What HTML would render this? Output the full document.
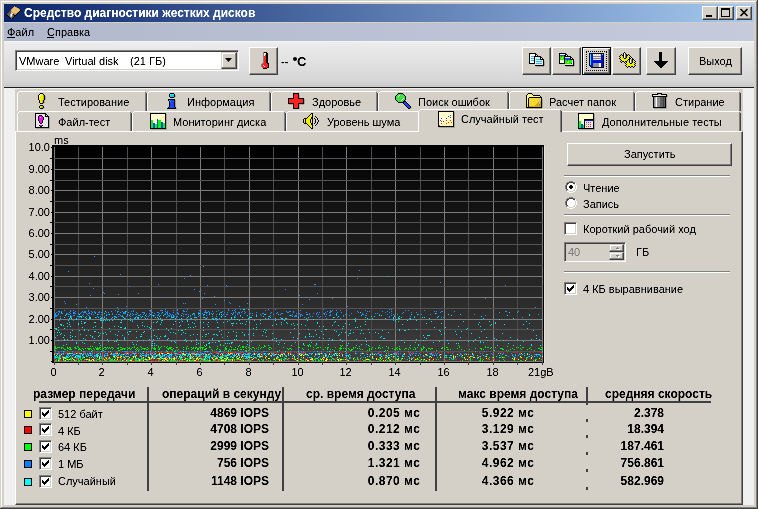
<!DOCTYPE html><html><head><meta charset="utf-8"><style>
html,body{margin:0;padding:0;}
body{width:758px;height:509px;position:relative;overflow:hidden;background:#d4d0c8;font-family:"Liberation Sans", sans-serif;font-size:11px;}
div{box-sizing:border-box;}
svg{position:absolute;overflow:visible}
.t{filter:url(#c)}
</style></head><body>
<svg width="0" height="0" style="position:absolute"><filter id="c" x="-10%" y="-50%" width="120%" height="200%"><feComponentTransfer><feFuncA type="linear" slope="1.6" intercept="-0.25"/></feComponentTransfer></filter></svg>
<div style="position:absolute;left:0px;top:0px;width:758px;height:509px;background:#d4d0c8;"></div>
<div style="position:absolute;left:1px;top:1px;width:756px;height:1px;background:#fff;"></div>
<div style="position:absolute;left:1px;top:1px;width:1px;height:506px;background:#fff;"></div>
<div style="position:absolute;left:0px;top:508px;width:758px;height:1px;background:#404040;"></div>
<div style="position:absolute;left:757px;top:0px;width:1px;height:509px;background:#404040;"></div>
<div style="position:absolute;left:1px;top:507px;width:756px;height:1px;background:#808080;"></div>
<div style="position:absolute;left:756px;top:1px;width:1px;height:507px;background:#808080;"></div>
<div style="position:absolute;left:4px;top:4px;width:750px;height:18px;background:linear-gradient(90deg,#0a246a,#a6caf0);"></div>
<svg style="left:6px;top:6px" width="16" height="13" shape-rendering="crispEdges"><path d="M8 0h1v1h-1zM7 1h1v1h-1zM10 1h1v1h-1zM6 2h1v1h-1zM12 2h1v1h-1zM5 3h1v1h-1zM13 3h1v1h-1zM5 5h1v1h-1zM6 6h1v1h-1zM11 6h1v1h-1zM7 7h4v1h-4zM8 8h2v1h-2z" fill="#c89040"/><path d="M8 1h2v1h-2zM7 2h5v1h-5zM6 3h3v1h-3zM11 3h2v1h-2zM5 4h4v1h-4zM11 4h3v1h-3zM6 5h7v1h-7zM7 6h4v1h-4z" fill="#f0c070"/><path d="M9 3h2v1h-2zM9 4h2v1h-2zM5 6h1v1h-1zM5 7h1v1h-1zM4 8h1v1h-1zM4 9h1v1h-1zM4 10h2v1h-2z" fill="#c0c0c0"/><path d="M4 4h1v1h-1zM3 5h1v1h-1zM2 6h1v1h-1zM1 7h1v1h-1z" fill="#404040"/><path d="M14 4h1v1h-1zM13 5h1v1h-1zM12 6h1v1h-1zM11 7h1v1h-1zM0 8h1v1h-1zM7 8h1v1h-1zM10 8h1v1h-1zM1 9h1v1h-1zM8 9h2v1h-2zM2 10h1v1h-1zM8 10h1v1h-1zM3 11h1v1h-1zM7 11h1v1h-1zM4 12h1v1h-1zM6 12h1v1h-1z" fill="#000000"/><path d="M4 5h1v1h-1zM3 6h2v1h-2zM2 7h3v1h-3zM1 8h3v1h-3zM2 9h2v1h-2zM7 9h1v1h-1zM3 10h1v1h-1zM6 10h2v1h-2zM4 11h3v1h-3zM5 12h1v1h-1z" fill="#606060"/><path d="M6 7h1v1h-1zM5 8h1v1h-1zM5 9h1v1h-1z" fill="#ffffff"/><path d="M6 8h1v1h-1zM6 9h1v1h-1z" fill="#808080"/></svg>
<div class="t" style="position:absolute;left:24px;top:6.84px;line-height:12px;font-size:12px;font-weight:bold;color:#fff;white-space:pre;">Средство диагностики жестких дисков</div>
<div style="position:absolute;left:702px;top:6px;width:16px;height:14px;box-sizing:border-box;background:#d4d0c8;border:1px solid;border-color:#fff #404040 #404040 #fff;box-shadow:inset -1px -1px #808080;"></div>
<div style="position:absolute;left:718px;top:6px;width:16px;height:14px;box-sizing:border-box;background:#d4d0c8;border:1px solid;border-color:#fff #404040 #404040 #fff;box-shadow:inset -1px -1px #808080;"></div>
<div style="position:absolute;left:736px;top:6px;width:16px;height:14px;box-sizing:border-box;background:#d4d0c8;border:1px solid;border-color:#fff #404040 #404040 #fff;box-shadow:inset -1px -1px #808080;"></div>
<div style="position:absolute;left:706px;top:15px;width:6px;height:2px;background:#000;"></div>
<div style="position:absolute;left:721px;top:8px;width:9px;height:9px;border:1px solid #000;border-top-width:2px"></div>
<svg style="left:740px;top:9px" width="8" height="7" viewBox="0 0 8 7"><path d="M0.5,0 L7.5,7 M7.5,0 L0.5,7" stroke="#000" stroke-width="1.6"/></svg>
<div style="position:absolute;left:4px;top:22px;width:750px;height:1px;background:#d4d0c8;"></div>
<div style="position:absolute;left:4px;top:23px;width:750px;height:18px;background:linear-gradient(90deg,#b1b8cd,#c5cbdb);"></div>
<div class="t" style="position:absolute;left:7px;top:26.69px;line-height:11px;font-size:11px;font-weight:normal;color:#000;white-space:pre;">Файл</div>
<div style="position:absolute;left:7px;top:37px;width:8px;height:1px;background:#000;"></div>
<div class="t" style="position:absolute;left:47px;top:26.69px;line-height:11px;font-size:11px;font-weight:normal;color:#000;white-space:pre;">Справка</div>
<div style="position:absolute;left:47px;top:37px;width:7px;height:1px;background:#000;"></div>
<div style="position:absolute;left:4px;top:41px;width:750px;height:46px;background:linear-gradient(180deg,#f6f6f6 0px,#ececec 2px,#d6d6d6 40px,#c8c8c8 46px);"></div>
<div style="position:absolute;left:4px;top:87px;width:750px;height:1px;background:#1e1e1e;"></div>
<div style="position:absolute;left:4px;top:88px;width:750px;height:417px;background:#f0f0f0;"></div>
<div style="position:absolute;left:15px;top:50px;width:224px;height:21px;box-sizing:border-box;background:#fff;border:1px solid;border-color:#808080 #fff #fff #808080;box-shadow:inset 1px 1px #404040, inset -1px -1px #d4d0c8;"></div>
<div class="t" style="position:absolute;left:19px;top:55.69px;line-height:11px;font-size:11px;font-weight:normal;color:#000;white-space:pre;">VMware</div>
<div class="t" style="position:absolute;left:65px;top:55.69px;line-height:11px;font-size:11px;font-weight:normal;color:#000;white-space:pre;">Virtual disk</div>
<div class="t" style="position:absolute;left:130px;top:55.69px;line-height:11px;font-size:11px;font-weight:normal;color:#000;white-space:pre;">(21 ГБ)</div>
<div style="position:absolute;left:221px;top:52px;width:16px;height:17px;box-sizing:border-box;background:#d4d0c8;border:1px solid;border-color:#d4d0c8 #404040 #404040 #d4d0c8;box-shadow:inset -1px -1px #808080, inset 1px 1px #fff;"></div>
<svg style="left:225px;top:58px" width="8" height="5" viewBox="0 0 8 5"><polygon points="0,0 7,0 3.5,4" fill="#000"/></svg>
<div style="position:absolute;left:249px;top:47px;width:29px;height:28px;box-sizing:border-box;background:#d4d0c8;border:1px solid;border-color:#fff #404040 #404040 #fff;box-shadow:inset -1px -1px #808080;"></div>
<svg style="left:260px;top:52px" width="9" height="17" shape-rendering="crispEdges"><path d="M3 0h1v1h-1zM3 1h1v1h-1zM3 2h1v1h-1zM3 3h1v1h-1zM3 4h1v1h-1zM3 5h1v1h-1zM3 6h1v1h-1zM3 7h1v1h-1zM3 8h1v1h-1zM3 9h1v1h-1zM3 10h1v1h-1zM2 11h1v1h-1zM1 12h1v1h-1zM1 13h1v1h-1zM1 14h1v1h-1zM2 15h1v1h-1z" fill="#808080"/><path d="M4 0h3v1h-3zM6 1h2v1h-2zM6 2h2v1h-2zM6 3h2v1h-2zM6 4h2v1h-2zM6 5h2v1h-2zM6 6h2v1h-2zM6 7h2v1h-2zM6 8h2v1h-2zM6 9h2v1h-2zM6 10h2v1h-2zM7 11h2v1h-2zM8 12h1v1h-1zM8 13h1v1h-1zM8 14h1v1h-1zM7 15h2v1h-2zM3 16h4v1h-4z" fill="#000000"/><path d="M4 1h2v1h-2zM4 2h1v1h-1zM4 3h1v1h-1zM3 13h1v1h-1zM4 14h1v1h-1z" fill="#ffffff"/><path d="M5 2h1v1h-1z" fill="#c0c0c0"/><path d="M5 3h1v1h-1zM4 4h2v1h-2zM4 5h2v1h-2zM4 6h2v1h-2zM4 7h2v1h-2zM4 8h2v1h-2zM4 9h2v1h-2zM4 10h2v1h-2zM3 11h4v1h-4zM2 12h6v1h-6zM2 13h1v1h-1zM4 13h4v1h-4zM2 14h2v1h-2zM5 14h3v1h-3zM3 15h4v1h-4z" fill="#ff2020"/></svg>
<div class="t" style="position:absolute;left:281px;top:55.69px;line-height:11px;font-size:11px;font-weight:bold;color:#000;white-space:pre;">--</div>
<div style="position:absolute;left:293px;top:57px;width:4px;height:4px;border-radius:2px;background:#000"></div>
<div class="t" style="position:absolute;left:297px;top:55.00px;line-height:13px;font-size:13px;font-weight:bold;color:#000;white-space:pre;">C</div>
<div style="position:absolute;left:522px;top:47px;width:29px;height:28px;box-sizing:border-box;background:#d4d0c8;border:1px solid;border-color:#fff #404040 #404040 #fff;box-shadow:inset -1px -1px #808080;"></div>
<div style="position:absolute;left:552px;top:47px;width:29px;height:28px;box-sizing:border-box;background:#d4d0c8;border:1px solid;border-color:#fff #404040 #404040 #fff;box-shadow:inset -1px -1px #808080;"></div>
<div style="position:absolute;left:612px;top:47px;width:29px;height:28px;box-sizing:border-box;background:#d4d0c8;border:1px solid;border-color:#fff #404040 #404040 #fff;box-shadow:inset -1px -1px #808080;"></div>
<div style="position:absolute;left:646px;top:47px;width:30px;height:28px;box-sizing:border-box;background:#d4d0c8;border:1px solid;border-color:#fff #404040 #404040 #fff;box-shadow:inset -1px -1px #808080;"></div>
<div style="position:absolute;left:688px;top:47px;width:54px;height:28px;box-sizing:border-box;background:#d4d0c8;border:1px solid;border-color:#fff #404040 #404040 #fff;box-shadow:inset -1px -1px #808080;"></div>
<div style="position:absolute;left:582px;top:47px;width:29px;height:28px;background:#d4d0c8;border:1px solid #000;box-shadow:inset 1px 1px #fff, inset -1px -1px #404040, inset -2px -2px #808080"></div>
<div style="position:absolute;left:586px;top:51px;width:21px;height:20px;border:1px dotted #000"></div>
<svg style="left:529px;top:53px" width="16" height="14" shape-rendering="crispEdges"><path d="M0 0h7v1h-7zM0 1h1v1h-1zM6 1h2v1h-2zM0 2h1v1h-1zM6 2h1v1h-1zM8 2h1v1h-1zM0 3h1v1h-1zM5 3h7v1h-7zM0 4h1v1h-1zM5 4h1v1h-1zM11 4h2v1h-2zM0 5h1v1h-1zM5 5h1v1h-1zM11 5h1v1h-1zM13 5h1v1h-1zM0 6h1v1h-1zM5 6h1v1h-1zM11 6h4v1h-4zM0 7h1v1h-1zM5 7h1v1h-1zM14 7h1v1h-1zM0 8h1v1h-1zM5 8h1v1h-1zM14 8h1v1h-1zM0 9h1v1h-1zM5 9h1v1h-1zM14 9h1v1h-1zM0 10h6v1h-6zM14 10h1v1h-1zM14 11h1v1h-1zM6 12h9v1h-9z" fill="#000000"/><path d="M1 1h5v1h-5zM1 2h5v1h-5zM7 2h1v1h-1zM1 3h1v1h-1zM1 4h4v1h-4zM1 5h1v1h-1zM12 5h1v1h-1zM1 6h4v1h-4zM1 7h1v1h-1zM1 8h4v1h-4zM1 9h4v1h-4z" fill="#ffffff"/><path d="M2 3h3v1h-3zM2 5h3v1h-3zM7 6h4v1h-4zM2 7h3v1h-3zM7 8h6v1h-6zM7 10h6v1h-6z" fill="#20c0ff"/><path d="M6 4h5v1h-5zM6 5h5v1h-5zM6 6h1v1h-1zM6 7h8v1h-8zM6 8h1v1h-1zM13 8h1v1h-1zM6 9h8v1h-8zM6 10h1v1h-1zM13 10h1v1h-1zM6 11h8v1h-8z" fill="#e8e8e8"/><path d="M15 8h1v1h-1zM15 9h1v1h-1zM15 10h1v1h-1zM15 11h1v1h-1zM15 12h1v1h-1zM7 13h8v1h-8z" fill="#a8a49c"/></svg>
<svg style="left:559px;top:53px" width="16" height="14" shape-rendering="crispEdges"><path d="M0 0h7v1h-7zM0 1h1v1h-1zM6 1h2v1h-2zM0 2h1v1h-1zM5 2h2v1h-2zM8 2h1v1h-1zM0 3h1v1h-1zM5 3h7v1h-7zM0 4h1v1h-1zM5 4h1v1h-1zM11 4h2v1h-2zM0 5h1v1h-1zM5 5h1v1h-1zM11 5h1v1h-1zM13 5h1v1h-1zM0 6h1v1h-1zM5 6h1v1h-1zM11 6h4v1h-4zM0 7h1v1h-1zM5 7h1v1h-1zM14 7h1v1h-1zM0 8h1v1h-1zM5 8h1v1h-1zM14 8h1v1h-1zM0 9h1v1h-1zM5 9h1v1h-1zM14 9h1v1h-1zM0 10h6v1h-6zM12 10h1v1h-1zM14 10h1v1h-1zM14 11h1v1h-1zM6 12h9v1h-9z" fill="#000000"/><path d="M1 1h5v1h-5zM7 2h1v1h-1zM12 5h1v1h-1zM1 7h4v1h-4zM1 8h4v1h-4zM1 9h4v1h-4z" fill="#ffffff"/><path d="M1 2h4v1h-4zM6 5h5v1h-5zM6 6h5v1h-5z" fill="#2040ff"/><path d="M1 3h1v1h-1zM3 3h2v1h-2zM1 4h2v1h-2zM4 4h1v1h-1zM1 5h1v1h-1zM4 5h1v1h-1zM1 6h4v1h-4zM6 7h2v1h-2zM9 7h4v1h-4zM6 8h3v1h-3zM10 8h3v1h-3zM6 9h2v1h-2zM10 9h3v1h-3zM6 10h6v1h-6z" fill="#00ff00"/><path d="M2 3h1v1h-1zM8 7h1v1h-1z" fill="#ff2020"/><path d="M3 4h1v1h-1zM2 5h2v1h-2zM9 8h1v1h-1zM8 9h2v1h-2z" fill="#f0f000"/><path d="M6 4h5v1h-5zM13 7h1v1h-1zM13 8h1v1h-1zM13 9h1v1h-1zM13 10h1v1h-1zM6 11h8v1h-8z" fill="#e8e8e8"/><path d="M15 8h1v1h-1zM15 9h1v1h-1zM15 10h1v1h-1zM15 11h1v1h-1zM15 12h1v1h-1zM7 13h8v1h-8z" fill="#a8a49c"/></svg>
<svg style="left:589px;top:53px" width="15" height="15" shape-rendering="crispEdges"><path d="M0 0h15v1h-15zM0 1h1v1h-1zM14 1h1v1h-1zM0 2h1v1h-1zM14 2h1v1h-1zM0 3h1v1h-1zM14 3h1v1h-1zM0 4h1v1h-1zM14 4h1v1h-1zM0 5h1v1h-1zM14 5h1v1h-1zM0 6h1v1h-1zM14 6h1v1h-1zM0 7h1v1h-1zM14 7h1v1h-1zM0 8h1v1h-1zM14 8h1v1h-1zM0 9h1v1h-1zM14 9h1v1h-1zM0 10h1v1h-1zM14 10h1v1h-1zM0 11h1v1h-1zM14 11h1v1h-1zM0 12h1v1h-1zM14 12h1v1h-1zM1 13h1v1h-1zM14 13h1v1h-1zM2 14h13v1h-13z" fill="#000000"/><path d="M1 1h1v1h-1zM13 1h1v1h-1zM1 2h1v1h-1zM1 3h1v1h-1zM1 4h1v1h-1zM1 5h1v1h-1zM1 6h1v1h-1zM1 7h1v1h-1zM1 8h1v1h-1zM1 9h1v1h-1zM1 10h1v1h-1zM1 11h1v1h-1z" fill="#00ffff"/><path d="M2 1h2v1h-2zM12 1h1v1h-1zM2 2h2v1h-2zM12 2h2v1h-2zM2 3h2v1h-2zM12 3h2v1h-2zM2 4h2v1h-2zM12 4h2v1h-2zM2 5h2v1h-2zM12 5h2v1h-2zM2 6h2v1h-2zM12 6h2v1h-2zM2 7h12v1h-12zM2 8h12v1h-12zM2 9h12v1h-12zM2 10h2v1h-2zM12 10h2v1h-2zM2 11h2v1h-2zM12 11h2v1h-2zM1 12h3v1h-3zM12 12h2v1h-2zM2 13h2v1h-2zM12 13h2v1h-2z" fill="#0010e0"/><path d="M4 1h1v1h-1zM6 1h1v1h-1zM8 1h1v1h-1zM10 1h1v1h-1zM10 10h2v1h-2zM10 11h2v1h-2zM10 12h2v1h-2zM10 13h2v1h-2z" fill="#ffffff"/><path d="M5 1h1v1h-1zM7 1h1v1h-1zM9 1h1v1h-1zM11 1h1v1h-1z" fill="#c0c0c0"/><path d="M4 2h8v1h-8zM4 4h8v1h-8zM4 6h8v1h-8z" fill="#e8e8e8"/><path d="M4 3h8v1h-8zM4 5h8v1h-8z" fill="#808080"/><path d="M4 10h6v1h-6zM4 11h6v1h-6zM4 12h6v1h-6zM4 13h6v1h-6z" fill="#909090"/></svg>
<svg style="left:619px;top:52px" width="17" height="16" shape-rendering="crispEdges"><path d="M5 0h1v1h-1zM4 1h1v1h-1zM6 1h1v1h-1zM2 2h1v1h-1zM4 2h1v1h-1zM7 2h1v1h-1zM9 2h1v1h-1zM1 3h1v1h-1zM3 3h2v1h-2zM7 3h2v1h-2zM10 3h1v1h-1zM0 4h1v1h-1zM4 4h1v1h-1zM7 4h1v1h-1zM11 4h1v1h-1zM1 5h1v1h-1zM4 5h1v1h-1zM7 5h1v1h-1zM10 5h1v1h-1zM12 5h1v1h-1zM0 6h1v1h-1zM5 6h2v1h-2zM10 6h2v1h-2zM13 6h1v1h-1zM1 7h1v1h-1zM9 7h2v1h-2zM13 7h2v1h-2zM2 8h1v1h-1zM8 8h1v1h-1zM10 8h1v1h-1zM13 8h1v1h-1zM15 8h1v1h-1zM1 9h1v1h-1zM3 9h2v1h-2zM6 9h2v1h-2zM10 9h1v1h-1zM13 9h1v1h-1zM16 9h1v1h-1zM2 10h1v1h-1zM5 10h1v1h-1zM7 10h1v1h-1zM10 10h1v1h-1zM13 10h1v1h-1zM15 10h1v1h-1zM6 11h1v1h-1zM11 11h2v1h-2zM16 11h1v1h-1zM7 12h1v1h-1zM15 12h1v1h-1zM6 13h1v1h-1zM16 13h1v1h-1zM7 14h1v1h-1zM9 14h2v1h-2zM12 14h2v1h-2zM15 14h1v1h-1zM8 15h1v1h-1zM11 15h1v1h-1zM14 15h1v1h-1z" fill="#000000"/><path d="M5 1h1v1h-1zM5 2h1v1h-1zM5 3h1v1h-1zM5 4h1v1h-1zM5 5h1v1h-1zM12 6h1v1h-1zM11 7h1v1h-1zM11 8h1v1h-1zM11 9h1v1h-1zM11 10h1v1h-1z" fill="#ffffff"/><path d="M6 2h1v1h-1zM6 3h1v1h-1zM6 4h1v1h-1zM6 5h1v1h-1zM12 7h1v1h-1zM12 8h1v1h-1zM12 9h1v1h-1zM12 10h1v1h-1z" fill="#808080"/><path d="M2 3h1v1h-1zM9 3h1v1h-1zM1 4h3v1h-3zM8 4h3v1h-3zM2 5h2v1h-2zM8 5h2v1h-2zM1 6h4v1h-4zM7 6h3v1h-3zM2 7h7v1h-7zM3 8h5v1h-5zM9 8h1v1h-1zM14 8h1v1h-1zM2 9h1v1h-1zM5 9h1v1h-1zM8 9h2v1h-2zM14 9h2v1h-2zM8 10h2v1h-2zM14 10h1v1h-1zM7 11h4v1h-4zM13 11h3v1h-3zM8 12h7v1h-7zM7 13h9v1h-9zM8 14h1v1h-1zM11 14h1v1h-1zM14 14h1v1h-1z" fill="#f0f000"/></svg>
<svg style="left:654px;top:52px" width="14" height="16" shape-rendering="crispEdges"><path d="M5 0h3v1h-3zM5 1h3v1h-3zM5 2h3v1h-3zM5 3h3v1h-3zM5 4h3v1h-3zM5 5h3v1h-3zM5 6h3v1h-3zM5 7h3v1h-3zM5 8h3v1h-3zM0 9h14v1h-14zM1 10h12v1h-12zM2 11h10v1h-10zM3 12h8v1h-8zM4 13h6v1h-6zM5 14h4v1h-4zM6 15h2v1h-2z" fill="#000000"/></svg>
<div class="t" style="position:absolute;left:699px;top:55.69px;line-height:11px;font-size:11px;font-weight:normal;color:#000;white-space:pre;">Выход</div>
<div style="position:absolute;left:15px;top:89px;width:728px;height:416px;background:#d4d0c8;"></div>
<div style="position:absolute;left:15px;top:131px;width:728px;height:374px;border:1px solid;border-color:#fff #404040 #404040 #fff;box-shadow:inset -1px -1px #808080"></div>
<div style="position:absolute;left:17px;top:91px;width:130px;height:20px;background:#d4d0c8"><div style="position:absolute;left:2px;top:0;width:126px;height:1px;background:#fff"></div><div style="position:absolute;left:0;top:2px;width:1px;height:18px;background:#fff"></div><div style="position:absolute;left:1px;top:1px;width:1px;height:1px;background:#fff"></div><div style="position:absolute;left:129px;top:2px;width:1px;height:18px;background:#404040"></div><div style="position:absolute;left:128px;top:1px;width:1px;height:19px;background:#808080"></div></div>
<div style="position:absolute;left:147px;top:91px;width:124px;height:20px;background:#d4d0c8"><div style="position:absolute;left:2px;top:0;width:120px;height:1px;background:#fff"></div><div style="position:absolute;left:0;top:2px;width:1px;height:18px;background:#fff"></div><div style="position:absolute;left:1px;top:1px;width:1px;height:1px;background:#fff"></div><div style="position:absolute;left:123px;top:2px;width:1px;height:18px;background:#404040"></div><div style="position:absolute;left:122px;top:1px;width:1px;height:19px;background:#808080"></div></div>
<div style="position:absolute;left:271px;top:91px;width:107px;height:20px;background:#d4d0c8"><div style="position:absolute;left:2px;top:0;width:103px;height:1px;background:#fff"></div><div style="position:absolute;left:0;top:2px;width:1px;height:18px;background:#fff"></div><div style="position:absolute;left:1px;top:1px;width:1px;height:1px;background:#fff"></div><div style="position:absolute;left:106px;top:2px;width:1px;height:18px;background:#404040"></div><div style="position:absolute;left:105px;top:1px;width:1px;height:19px;background:#808080"></div></div>
<div style="position:absolute;left:378px;top:91px;width:131px;height:20px;background:#d4d0c8"><div style="position:absolute;left:2px;top:0;width:127px;height:1px;background:#fff"></div><div style="position:absolute;left:0;top:2px;width:1px;height:18px;background:#fff"></div><div style="position:absolute;left:1px;top:1px;width:1px;height:1px;background:#fff"></div><div style="position:absolute;left:130px;top:2px;width:1px;height:18px;background:#404040"></div><div style="position:absolute;left:129px;top:1px;width:1px;height:19px;background:#808080"></div></div>
<div style="position:absolute;left:509px;top:91px;width:126px;height:20px;background:#d4d0c8"><div style="position:absolute;left:2px;top:0;width:122px;height:1px;background:#fff"></div><div style="position:absolute;left:0;top:2px;width:1px;height:18px;background:#fff"></div><div style="position:absolute;left:1px;top:1px;width:1px;height:1px;background:#fff"></div><div style="position:absolute;left:125px;top:2px;width:1px;height:18px;background:#404040"></div><div style="position:absolute;left:124px;top:1px;width:1px;height:19px;background:#808080"></div></div>
<div style="position:absolute;left:635px;top:91px;width:106px;height:20px;background:#d4d0c8"><div style="position:absolute;left:2px;top:0;width:102px;height:1px;background:#fff"></div><div style="position:absolute;left:0;top:2px;width:1px;height:18px;background:#fff"></div><div style="position:absolute;left:1px;top:1px;width:1px;height:1px;background:#fff"></div><div style="position:absolute;left:105px;top:2px;width:1px;height:18px;background:#404040"></div><div style="position:absolute;left:104px;top:1px;width:1px;height:19px;background:#808080"></div></div>
<div style="position:absolute;left:17px;top:111px;width:115px;height:20px;background:#d4d0c8"><div style="position:absolute;left:2px;top:0;width:111px;height:1px;background:#fff"></div><div style="position:absolute;left:0;top:2px;width:1px;height:18px;background:#fff"></div><div style="position:absolute;left:1px;top:1px;width:1px;height:1px;background:#fff"></div><div style="position:absolute;left:114px;top:2px;width:1px;height:18px;background:#404040"></div><div style="position:absolute;left:113px;top:1px;width:1px;height:19px;background:#808080"></div></div>
<div style="position:absolute;left:132px;top:111px;width:154px;height:20px;background:#d4d0c8"><div style="position:absolute;left:2px;top:0;width:150px;height:1px;background:#fff"></div><div style="position:absolute;left:0;top:2px;width:1px;height:18px;background:#fff"></div><div style="position:absolute;left:1px;top:1px;width:1px;height:1px;background:#fff"></div><div style="position:absolute;left:153px;top:2px;width:1px;height:18px;background:#404040"></div><div style="position:absolute;left:152px;top:1px;width:1px;height:19px;background:#808080"></div></div>
<div style="position:absolute;left:286px;top:111px;width:134px;height:20px;background:#d4d0c8"><div style="position:absolute;left:2px;top:0;width:130px;height:1px;background:#fff"></div><div style="position:absolute;left:0;top:2px;width:1px;height:18px;background:#fff"></div><div style="position:absolute;left:1px;top:1px;width:1px;height:1px;background:#fff"></div><div style="position:absolute;left:133px;top:2px;width:1px;height:18px;background:#404040"></div><div style="position:absolute;left:132px;top:1px;width:1px;height:19px;background:#808080"></div></div>
<div style="position:absolute;left:560px;top:111px;width:181px;height:20px;background:#d4d0c8"><div style="position:absolute;left:2px;top:0;width:177px;height:1px;background:#fff"></div><div style="position:absolute;left:0;top:2px;width:1px;height:18px;background:#fff"></div><div style="position:absolute;left:1px;top:1px;width:1px;height:1px;background:#fff"></div><div style="position:absolute;left:180px;top:2px;width:1px;height:18px;background:#404040"></div><div style="position:absolute;left:179px;top:1px;width:1px;height:19px;background:#808080"></div></div>
<div style="position:absolute;left:418px;top:109px;width:144px;height:23px;background:#d4d0c8"><div style="position:absolute;left:2px;top:0;width:140px;height:1px;background:#fff"></div><div style="position:absolute;left:0;top:2px;width:1px;height:21px;background:#fff"></div><div style="position:absolute;left:1px;top:1px;width:1px;height:1px;background:#fff"></div><div style="position:absolute;left:143px;top:2px;width:1px;height:21px;background:#404040"></div><div style="position:absolute;left:142px;top:1px;width:1px;height:22px;background:#808080"></div></div>
<div style="position:absolute;left:419px;top:131px;width:140px;height:1px;background:#d4d0c8;"></div>
<div class="t" style="position:absolute;left:58px;top:96.69px;line-height:11px;font-size:11px;font-weight:normal;color:#000;white-space:pre;">Тестирование</div>
<div class="t" style="position:absolute;left:187px;top:96.69px;line-height:11px;font-size:11px;font-weight:normal;color:#000;white-space:pre;">Информация</div>
<div class="t" style="position:absolute;left:312px;top:96.69px;line-height:11px;font-size:11px;font-weight:normal;color:#000;white-space:pre;">Здоровье</div>
<div class="t" style="position:absolute;left:418px;top:96.69px;line-height:11px;font-size:11px;font-weight:normal;color:#000;white-space:pre;">Поиск ошибок</div>
<div class="t" style="position:absolute;left:549px;top:96.69px;line-height:11px;font-size:11px;font-weight:normal;color:#000;white-space:pre;">Расчет папок</div>
<div class="t" style="position:absolute;left:675px;top:96.69px;line-height:11px;font-size:11px;font-weight:normal;color:#000;white-space:pre;">Стирание</div>
<div class="t" style="position:absolute;left:58px;top:116.69px;line-height:11px;font-size:11px;font-weight:normal;color:#000;white-space:pre;">Файл-тест</div>
<div class="t" style="position:absolute;left:173px;top:116.69px;line-height:11px;font-size:11px;font-weight:normal;color:#000;white-space:pre;">Мониторинг диска</div>
<div class="t" style="position:absolute;left:327px;top:116.69px;line-height:11px;font-size:11px;font-weight:normal;color:#000;white-space:pre;">Уровень шума</div>
<div class="t" style="position:absolute;left:461px;top:113.69px;line-height:11px;font-size:11px;font-weight:normal;color:#000;white-space:pre;">Случайный тест</div>
<div class="t" style="position:absolute;left:602px;top:116.69px;line-height:11px;font-size:11px;font-weight:normal;color:#000;white-space:pre;">Дополнительные тесты</div>
<svg style="left:37px;top:93px" width="9" height="16" shape-rendering="crispEdges"><path d="M3 0h3v1h-3zM2 1h1v1h-1zM6 1h1v1h-1zM1 2h1v1h-1zM7 2h1v1h-1zM1 3h1v1h-1zM7 3h1v1h-1zM1 4h1v1h-1zM7 4h1v1h-1zM1 5h1v1h-1zM7 5h1v1h-1zM1 6h1v1h-1zM7 6h1v1h-1zM2 7h1v1h-1zM6 7h1v1h-1zM2 8h1v1h-1zM6 8h1v1h-1zM2 9h1v1h-1zM6 9h1v1h-1zM3 10h3v1h-3zM3 12h3v1h-3zM2 13h1v1h-1zM6 13h1v1h-1zM2 14h1v1h-1zM6 14h1v1h-1zM3 15h3v1h-3z" fill="#000000"/><path d="M3 1h1v1h-1zM2 2h1v1h-1zM2 3h1v1h-1z" fill="#ffffff"/><path d="M4 1h1v1h-1zM3 2h1v1h-1zM2 4h1v1h-1z" fill="#ffff80"/><path d="M5 1h1v1h-1zM4 2h2v1h-2zM3 3h3v1h-3zM3 4h3v1h-3zM2 5h4v1h-4zM2 6h4v1h-4zM3 7h2v1h-2zM3 8h2v1h-2zM3 9h2v1h-2zM3 13h2v1h-2zM3 14h1v1h-1z" fill="#f0f000"/><path d="M6 2h1v1h-1zM6 3h1v1h-1zM6 4h1v1h-1zM6 5h1v1h-1zM6 6h1v1h-1zM5 7h1v1h-1zM5 8h1v1h-1zM5 9h1v1h-1zM5 13h1v1h-1zM4 14h2v1h-2z" fill="#b8b800"/><path d="M8 3h1v1h-1zM8 4h1v1h-1zM8 5h1v1h-1zM8 6h1v1h-1zM7 7h1v1h-1zM7 8h1v1h-1zM7 9h1v1h-1zM6 10h1v1h-1zM7 14h1v1h-1zM6 15h1v1h-1z" fill="#a8a49c"/></svg>
<svg style="left:167px;top:93px" width="10" height="16" shape-rendering="crispEdges"><path d="M3 0h4v1h-4zM2 1h1v1h-1zM7 1h1v1h-1zM2 2h1v1h-1zM7 2h1v1h-1zM2 3h1v1h-1zM7 3h1v1h-1zM3 4h4v1h-4zM1 6h7v1h-7zM1 7h1v1h-1zM7 7h1v1h-1zM2 8h1v1h-1zM7 8h1v1h-1zM2 9h1v1h-1zM7 9h1v1h-1zM2 10h1v1h-1zM7 10h1v1h-1zM2 11h1v1h-1zM7 11h1v1h-1zM2 12h1v1h-1zM7 12h1v1h-1zM2 13h1v1h-1zM7 13h1v1h-1zM1 14h1v1h-1zM8 14h1v1h-1zM0 15h9v1h-9z" fill="#000000"/><path d="M3 1h3v1h-3zM3 2h1v1h-1z" fill="#00ffff"/><path d="M6 1h1v1h-1zM4 2h3v1h-3zM3 3h4v1h-4zM2 7h1v1h-1zM3 8h1v1h-1z" fill="#20c0ff"/><path d="M8 2h1v1h-1zM8 3h1v1h-1zM7 4h1v1h-1zM8 7h1v1h-1zM8 8h1v1h-1zM8 9h1v1h-1zM8 10h1v1h-1zM8 11h1v1h-1zM8 12h1v1h-1zM8 13h1v1h-1zM9 15h1v1h-1z" fill="#a8a49c"/><path d="M3 7h4v1h-4zM4 8h3v1h-3zM3 9h4v1h-4zM3 10h4v1h-4zM3 11h4v1h-4zM3 12h4v1h-4zM3 13h4v1h-4zM2 14h6v1h-6z" fill="#2040ff"/></svg>
<svg style="left:288px;top:93px" width="17" height="16" shape-rendering="crispEdges"><path d="M5 0h6v1h-6zM5 1h1v1h-1zM10 1h1v1h-1zM5 2h1v1h-1zM10 2h1v1h-1zM5 3h1v1h-1zM10 3h1v1h-1zM5 4h1v1h-1zM10 4h1v1h-1zM0 5h6v1h-6zM10 5h6v1h-6zM0 6h1v1h-1zM15 6h1v1h-1zM0 7h1v1h-1zM15 7h1v1h-1zM0 8h1v1h-1zM15 8h1v1h-1zM0 9h1v1h-1zM15 9h1v1h-1zM0 10h6v1h-6zM10 10h6v1h-6zM5 11h1v1h-1zM10 11h1v1h-1zM5 12h1v1h-1zM10 12h1v1h-1zM5 13h1v1h-1zM10 13h1v1h-1zM5 14h1v1h-1zM10 14h1v1h-1zM5 15h6v1h-6z" fill="#000000"/><path d="M6 1h4v1h-4zM6 2h4v1h-4zM6 3h4v1h-4zM6 4h4v1h-4zM6 5h4v1h-4zM1 6h14v1h-14zM1 7h14v1h-14zM1 8h14v1h-14zM1 9h14v1h-14zM6 10h4v1h-4zM6 11h4v1h-4zM6 12h4v1h-4zM6 13h4v1h-4zM6 14h4v1h-4z" fill="#ff2020"/><path d="M11 2h1v1h-1zM11 3h1v1h-1zM11 4h1v1h-1zM16 6h1v1h-1zM16 7h1v1h-1zM16 8h1v1h-1zM16 9h1v1h-1zM16 10h1v1h-1zM1 11h4v1h-4zM11 11h5v1h-5zM11 12h1v1h-1zM11 13h1v1h-1zM11 14h1v1h-1zM11 15h1v1h-1z" fill="#a8a49c"/></svg>
<svg style="left:394px;top:93px" width="18" height="16" shape-rendering="crispEdges"><path d="M4 0h5v1h-5zM3 1h1v1h-1zM9 1h1v1h-1zM2 2h1v1h-1zM10 2h1v1h-1zM1 3h1v1h-1zM11 3h1v1h-1zM1 4h1v1h-1zM11 4h1v1h-1zM1 5h1v1h-1zM11 5h1v1h-1zM1 6h1v1h-1zM11 6h1v1h-1zM2 7h1v1h-1zM10 7h1v1h-1zM3 8h1v1h-1zM9 8h3v1h-3zM4 9h6v1h-6zM12 9h1v1h-1zM9 10h1v1h-1zM13 10h1v1h-1zM10 11h1v1h-1zM14 11h1v1h-1zM11 12h1v1h-1zM15 12h1v1h-1zM12 13h1v1h-1zM16 13h1v1h-1zM13 14h1v1h-1zM16 14h1v1h-1zM14 15h2v1h-2z" fill="#000000"/><path d="M4 1h5v1h-5zM3 2h2v1h-2zM6 2h4v1h-4zM2 3h2v1h-2zM5 3h6v1h-6zM2 4h9v1h-9zM2 5h7v1h-7zM10 5h1v1h-1zM2 6h6v1h-6zM9 6h2v1h-2zM3 7h4v1h-4zM8 7h2v1h-2zM4 8h5v1h-5z" fill="#40e040"/><path d="M5 2h1v1h-1zM4 3h1v1h-1zM9 5h1v1h-1zM8 6h1v1h-1zM7 7h1v1h-1z" fill="#ffffff"/><path d="M11 7h1v1h-1zM17 14h1v1h-1zM16 15h1v1h-1z" fill="#a8a49c"/><path d="M10 9h2v1h-2zM10 10h3v1h-3zM11 11h3v1h-3zM12 12h3v1h-3zM13 13h3v1h-3zM14 14h2v1h-2z" fill="#2040ff"/></svg>
<svg style="left:526px;top:93px" width="17" height="16" shape-rendering="crispEdges"><path d="M2 0h4v1h-4zM1 1h1v1h-1zM6 1h1v1h-1zM0 2h1v1h-1zM7 2h7v1h-7zM0 3h1v1h-1zM14 3h1v1h-1zM0 4h1v1h-1zM3 4h13v1h-13zM0 5h1v1h-1zM2 5h1v1h-1zM15 5h1v1h-1zM0 6h1v1h-1zM2 6h1v1h-1zM15 6h1v1h-1zM0 7h1v1h-1zM2 7h1v1h-1zM15 7h1v1h-1zM0 8h1v1h-1zM2 8h1v1h-1zM15 8h1v1h-1zM0 9h1v1h-1zM2 9h1v1h-1zM15 9h1v1h-1zM0 10h1v1h-1zM2 10h1v1h-1zM15 10h1v1h-1zM0 11h1v1h-1zM2 11h1v1h-1zM15 11h1v1h-1zM0 12h1v1h-1zM2 12h1v1h-1zM15 12h1v1h-1zM0 13h1v1h-1zM2 13h1v1h-1zM15 13h1v1h-1zM0 14h16v1h-16z" fill="#000000"/><path d="M2 1h4v1h-4zM1 2h6v1h-6zM1 3h13v1h-13zM1 4h2v1h-2zM1 5h1v1h-1zM1 6h1v1h-1zM1 7h1v1h-1zM1 8h1v1h-1zM1 9h1v1h-1zM1 10h1v1h-1z" fill="#ffff80"/><path d="M3 5h10v1h-10zM14 5h1v1h-1zM3 6h10v1h-10zM14 6h1v1h-1zM3 7h10v1h-10zM14 7h1v1h-1zM3 8h10v1h-10zM3 9h9v1h-9zM3 10h8v1h-8zM3 11h7v1h-7zM3 12h6v1h-6z" fill="#f8d830"/><path d="M13 5h1v1h-1zM13 6h1v1h-1zM13 7h1v1h-1zM13 8h1v1h-1zM13 9h1v1h-1zM13 10h1v1h-1zM13 13h1v1h-1z" fill="#c0c0c0"/><path d="M16 6h1v1h-1zM16 7h1v1h-1zM16 8h1v1h-1zM16 9h1v1h-1zM16 10h1v1h-1zM16 11h1v1h-1zM16 12h1v1h-1zM16 13h1v1h-1zM16 14h1v1h-1zM1 15h15v1h-15z" fill="#a8a49c"/><path d="M14 8h1v1h-1zM12 9h1v1h-1zM14 9h1v1h-1zM11 10h2v1h-2zM14 10h1v1h-1zM10 11h3v1h-3zM14 11h1v1h-1zM9 12h4v1h-4zM14 12h1v1h-1zM3 13h10v1h-10zM14 13h1v1h-1z" fill="#d8a800"/><path d="M1 11h1v1h-1zM1 12h1v1h-1zM1 13h1v1h-1z" fill="#f0f000"/><path d="M13 11h1v1h-1zM13 12h1v1h-1z" fill="#808080"/></svg>
<svg style="left:652px;top:93px" width="16" height="16" shape-rendering="crispEdges"><path d="M5 0h5v1h-5zM0 1h6v1h-6zM9 1h6v1h-6zM0 2h1v1h-1zM14 2h1v1h-1zM0 3h15v1h-15zM1 4h1v1h-1zM13 4h1v1h-1zM1 5h1v1h-1zM13 5h1v1h-1zM1 6h1v1h-1zM13 6h1v1h-1zM1 7h1v1h-1zM13 7h1v1h-1zM1 8h1v1h-1zM13 8h1v1h-1zM1 9h1v1h-1zM13 9h1v1h-1zM1 10h1v1h-1zM13 10h1v1h-1zM1 11h1v1h-1zM13 11h1v1h-1zM1 12h1v1h-1zM13 12h1v1h-1zM1 13h1v1h-1zM13 13h1v1h-1zM1 14h13v1h-13z" fill="#000000"/><path d="M6 1h3v1h-3zM3 4h1v1h-1zM3 5h1v1h-1zM3 6h1v1h-1zM3 7h1v1h-1zM3 8h1v1h-1zM3 9h1v1h-1zM3 10h1v1h-1zM3 11h1v1h-1zM3 12h1v1h-1zM3 13h1v1h-1z" fill="#c0c0c0"/><path d="M1 2h13v1h-13z" fill="#e8e8e8"/><path d="M15 2h1v1h-1zM15 3h1v1h-1zM14 4h1v1h-1zM14 5h1v1h-1zM14 6h1v1h-1zM14 7h1v1h-1zM14 8h1v1h-1zM14 9h1v1h-1zM14 10h1v1h-1zM14 11h1v1h-1zM14 12h1v1h-1zM14 13h1v1h-1zM14 14h1v1h-1zM2 15h13v1h-13z" fill="#a8a49c"/><path d="M2 4h1v1h-1zM5 4h3v1h-3zM2 5h1v1h-1zM5 5h3v1h-3zM2 6h1v1h-1zM5 6h3v1h-3zM2 7h1v1h-1zM5 7h3v1h-3zM2 8h1v1h-1zM5 8h3v1h-3zM2 9h1v1h-1zM5 9h3v1h-3zM2 10h1v1h-1zM5 10h3v1h-3zM2 11h1v1h-1zM5 11h3v1h-3zM2 12h1v1h-1zM5 12h3v1h-3zM2 13h1v1h-1zM5 13h3v1h-3z" fill="#909090"/><path d="M4 4h1v1h-1zM4 5h1v1h-1zM4 6h1v1h-1zM4 7h1v1h-1zM4 8h1v1h-1zM4 9h1v1h-1zM4 10h1v1h-1zM4 11h1v1h-1zM4 12h1v1h-1zM4 13h1v1h-1z" fill="#ffffff"/><path d="M8 4h3v1h-3zM12 4h1v1h-1zM8 5h3v1h-3zM12 5h1v1h-1zM8 6h3v1h-3zM12 6h1v1h-1zM8 7h3v1h-3zM12 7h1v1h-1zM8 8h3v1h-3zM12 8h1v1h-1zM8 9h3v1h-3zM12 9h1v1h-1zM8 10h3v1h-3zM12 10h1v1h-1zM8 11h3v1h-3zM12 11h1v1h-1zM8 12h3v1h-3zM12 12h1v1h-1zM8 13h3v1h-3zM12 13h1v1h-1z" fill="#606060"/><path d="M11 4h1v1h-1zM11 5h1v1h-1zM11 6h1v1h-1zM11 7h1v1h-1zM11 8h1v1h-1zM11 9h1v1h-1zM11 10h1v1h-1zM11 11h1v1h-1zM11 12h1v1h-1zM11 13h1v1h-1z" fill="#404040"/></svg>
<svg style="left:35px;top:113px" width="15" height="16" shape-rendering="crispEdges"><path d="M0 0h11v1h-11zM0 1h1v1h-1zM10 1h2v1h-2zM0 2h1v1h-1zM4 2h3v1h-3zM10 2h1v1h-1zM12 2h1v1h-1zM0 3h1v1h-1zM3 3h1v1h-1zM7 3h1v1h-1zM10 3h4v1h-4zM0 4h1v1h-1zM3 4h1v1h-1zM8 4h1v1h-1zM13 4h1v1h-1zM0 5h1v1h-1zM3 5h1v1h-1zM8 5h1v1h-1zM13 5h1v1h-1zM0 6h1v1h-1zM3 6h1v1h-1zM8 6h1v1h-1zM13 6h1v1h-1zM0 7h1v1h-1zM3 7h1v1h-1zM7 7h1v1h-1zM13 7h1v1h-1zM0 8h1v1h-1zM4 8h1v1h-1zM7 8h1v1h-1zM13 8h1v1h-1zM0 9h1v1h-1zM4 9h1v1h-1zM7 9h1v1h-1zM13 9h1v1h-1zM0 10h1v1h-1zM5 10h2v1h-2zM13 10h1v1h-1zM0 11h1v1h-1zM13 11h1v1h-1zM0 12h1v1h-1zM4 12h1v1h-1zM7 12h1v1h-1zM13 12h1v1h-1zM0 13h1v1h-1zM5 13h2v1h-2zM13 13h1v1h-1zM0 14h14v1h-14z" fill="#000000"/><path d="M1 1h9v1h-9zM1 2h3v1h-3zM7 2h3v1h-3zM1 3h2v1h-2zM8 3h2v1h-2zM1 4h2v1h-2zM9 4h4v1h-4zM1 5h2v1h-2zM9 5h4v1h-4zM1 6h2v1h-2zM9 6h4v1h-4zM1 7h2v1h-2zM8 7h5v1h-5zM1 8h3v1h-3zM8 8h5v1h-5zM1 9h3v1h-3zM8 9h5v1h-5zM1 10h4v1h-4zM7 10h6v1h-6zM1 11h12v1h-12zM1 12h3v1h-3zM8 12h5v1h-5zM1 13h4v1h-4zM7 13h6v1h-6z" fill="#e8e8e8"/><path d="M11 2h1v1h-1zM5 4h1v1h-1z" fill="#ffffff"/><path d="M4 3h3v1h-3zM4 4h1v1h-1zM6 4h2v1h-2zM4 5h4v1h-4zM4 6h4v1h-4zM4 7h3v1h-3zM5 8h2v1h-2zM5 9h2v1h-2zM5 12h2v1h-2z" fill="#ff00ff"/><path d="M14 4h1v1h-1zM14 5h1v1h-1zM14 6h1v1h-1zM14 7h1v1h-1zM14 8h1v1h-1zM14 9h1v1h-1zM14 10h1v1h-1zM14 11h1v1h-1zM14 12h1v1h-1zM14 13h1v1h-1zM14 14h1v1h-1zM1 15h14v1h-14z" fill="#a8a49c"/></svg>
<svg style="left:150px;top:113px" width="17" height="17" shape-rendering="crispEdges"><path d="M0 0h16v1h-16zM0 1h1v1h-1zM15 1h1v1h-1zM0 2h1v1h-1zM15 2h1v1h-1zM0 3h1v1h-1zM15 3h1v1h-1zM0 4h1v1h-1zM15 4h1v1h-1zM0 5h1v1h-1zM15 5h1v1h-1zM0 6h1v1h-1zM15 6h1v1h-1zM0 7h1v1h-1zM15 7h1v1h-1zM0 8h1v1h-1zM15 8h1v1h-1zM0 9h1v1h-1zM15 9h1v1h-1zM0 10h1v1h-1zM15 10h1v1h-1zM0 11h1v1h-1zM15 11h1v1h-1zM0 12h1v1h-1zM15 12h1v1h-1zM0 13h1v1h-1zM15 13h1v1h-1zM0 14h1v1h-1zM15 14h1v1h-1zM0 15h16v1h-16z" fill="#000000"/><path d="M1 1h14v1h-14zM1 2h13v1h-13zM1 3h12v1h-12zM1 4h11v1h-11zM1 5h10v1h-10zM1 6h6v1h-6zM8 6h2v1h-2zM3 7h4v1h-4zM3 8h4v1h-4zM3 9h4v1h-4zM5 10h1v1h-1z" fill="#ffffd0"/><path d="M16 1h1v1h-1zM16 2h1v1h-1zM16 3h1v1h-1zM16 4h1v1h-1zM16 5h1v1h-1zM16 6h1v1h-1zM16 7h1v1h-1zM16 8h1v1h-1zM16 9h1v1h-1zM16 10h1v1h-1zM16 11h1v1h-1zM16 12h1v1h-1zM16 13h1v1h-1zM16 14h1v1h-1zM16 15h1v1h-1zM1 16h16v1h-16z" fill="#a8a49c"/><path d="M14 2h1v1h-1zM13 3h2v1h-2zM12 4h3v1h-3zM11 5h4v1h-4zM10 6h5v1h-5zM11 7h4v1h-4zM11 8h4v1h-4zM13 9h2v1h-2zM6 10h1v1h-1z" fill="#fff8b0"/><path d="M7 6h1v1h-1zM7 7h1v1h-1zM7 8h1v1h-1zM7 9h1v1h-1zM11 9h2v1h-2zM3 10h2v1h-2zM7 10h1v1h-1zM11 10h2v1h-2zM3 11h2v1h-2zM7 11h1v1h-1zM11 11h2v1h-2zM3 12h2v1h-2zM7 12h1v1h-1zM11 12h2v1h-2zM3 13h2v1h-2zM7 13h1v1h-1zM11 13h2v1h-2zM3 14h2v1h-2zM7 14h1v1h-1zM11 14h2v1h-2z" fill="#2040ff"/><path d="M1 7h2v1h-2zM8 7h3v1h-3zM1 8h2v1h-2zM8 8h3v1h-3zM1 9h2v1h-2zM8 9h3v1h-3zM1 10h2v1h-2zM8 10h3v1h-3zM13 10h2v1h-2zM1 11h2v1h-2zM5 11h2v1h-2zM8 11h3v1h-3zM13 11h2v1h-2zM1 12h2v1h-2zM5 12h2v1h-2zM8 12h3v1h-3zM13 12h2v1h-2zM1 13h2v1h-2zM5 13h2v1h-2zM8 13h3v1h-3zM13 13h2v1h-2zM1 14h2v1h-2zM5 14h2v1h-2zM8 14h3v1h-3zM13 14h2v1h-2z" fill="#00ff00"/></svg>
<svg style="left:303px;top:113px" width="17" height="16" shape-rendering="crispEdges"><path d="M8 0h2v1h-2zM7 1h1v1h-1zM9 1h1v1h-1zM6 2h1v1h-1zM9 2h1v1h-1zM5 3h1v1h-1zM9 3h1v1h-1zM12 3h1v1h-1zM4 4h1v1h-1zM8 4h2v1h-2zM13 4h1v1h-1zM1 5h3v1h-3zM8 5h2v1h-2zM11 5h1v1h-1zM14 5h1v1h-1zM0 6h1v1h-1zM2 6h1v1h-1zM7 6h1v1h-1zM9 6h1v1h-1zM12 6h1v1h-1zM14 6h1v1h-1zM0 7h1v1h-1zM2 7h1v1h-1zM7 7h1v1h-1zM9 7h1v1h-1zM12 7h1v1h-1zM15 7h1v1h-1zM0 8h1v1h-1zM2 8h1v1h-1zM7 8h1v1h-1zM9 8h1v1h-1zM12 8h1v1h-1zM15 8h1v1h-1zM0 9h1v1h-1zM2 9h1v1h-1zM7 9h1v1h-1zM9 9h1v1h-1zM12 9h1v1h-1zM14 9h1v1h-1zM1 10h3v1h-3zM8 10h2v1h-2zM11 10h1v1h-1zM14 10h1v1h-1zM4 11h1v1h-1zM8 11h2v1h-2zM13 11h1v1h-1zM5 12h1v1h-1zM9 12h1v1h-1zM12 12h1v1h-1zM6 13h1v1h-1zM9 13h1v1h-1zM7 14h1v1h-1zM9 14h1v1h-1zM8 15h2v1h-2z" fill="#000000"/><path d="M8 1h1v1h-1zM7 2h2v1h-2zM6 3h3v1h-3zM5 4h3v1h-3zM4 5h4v1h-4zM1 6h1v1h-1zM3 6h4v1h-4zM8 6h1v1h-1zM1 7h1v1h-1zM3 7h4v1h-4zM8 7h1v1h-1zM1 8h1v1h-1zM3 8h4v1h-4zM8 8h1v1h-1zM1 9h1v1h-1zM3 9h4v1h-4zM8 9h1v1h-1zM4 10h4v1h-4zM5 11h3v1h-3zM6 12h3v1h-3zM7 13h2v1h-2zM8 14h1v1h-1z" fill="#f0f000"/></svg>
<svg style="left:438px;top:111px" width="17" height="17" shape-rendering="crispEdges"><path d="M0 0h16v1h-16zM0 1h1v1h-1zM15 1h1v1h-1zM0 2h1v1h-1zM15 2h1v1h-1zM0 3h1v1h-1zM15 3h1v1h-1zM0 4h1v1h-1zM15 4h1v1h-1zM0 5h1v1h-1zM15 5h1v1h-1zM0 6h1v1h-1zM15 6h1v1h-1zM0 7h1v1h-1zM15 7h1v1h-1zM0 8h1v1h-1zM15 8h1v1h-1zM0 9h1v1h-1zM15 9h1v1h-1zM0 10h1v1h-1zM15 10h1v1h-1zM0 11h1v1h-1zM15 11h1v1h-1zM0 12h1v1h-1zM15 12h1v1h-1zM0 13h1v1h-1zM15 13h1v1h-1zM0 14h1v1h-1zM15 14h1v1h-1zM0 15h16v1h-16z" fill="#000000"/><path d="M1 1h14v1h-14zM1 2h13v1h-13zM1 3h12v1h-12zM1 4h11v1h-11zM1 5h9v1h-9zM1 6h9v1h-9zM1 7h2v1h-2zM4 7h4v1h-4zM1 8h7v1h-7zM1 9h1v1h-1zM3 9h4v1h-4zM1 10h2v1h-2zM4 10h1v1h-1zM1 11h4v1h-4zM1 12h2v1h-2zM1 13h2v1h-2z" fill="#ffffd0"/><path d="M16 1h1v1h-1zM16 2h1v1h-1zM16 3h1v1h-1zM16 4h1v1h-1zM16 5h1v1h-1zM16 6h1v1h-1zM16 7h1v1h-1zM16 8h1v1h-1zM16 9h1v1h-1zM16 10h1v1h-1zM16 11h1v1h-1zM16 12h1v1h-1zM16 13h1v1h-1zM16 14h1v1h-1zM16 15h1v1h-1zM1 16h16v1h-16z" fill="#a8a49c"/><path d="M14 2h1v1h-1zM13 3h2v1h-2zM13 4h2v1h-2zM11 5h4v1h-4zM10 6h2v1h-2zM13 6h2v1h-2zM9 7h6v1h-6zM8 8h7v1h-7zM7 9h1v1h-1zM9 9h3v1h-3zM13 9h2v1h-2zM6 10h9v1h-9zM5 11h5v1h-5zM11 11h2v1h-2zM14 11h1v1h-1zM4 12h4v1h-4zM9 12h6v1h-6zM3 13h12v1h-12zM2 14h13v1h-13z" fill="#fff8b0"/><path d="M12 4h1v1h-1zM10 5h1v1h-1zM12 6h1v1h-1zM3 7h1v1h-1zM8 7h1v1h-1zM2 9h1v1h-1zM5 10h1v1h-1z" fill="#2040ff"/><path d="M8 9h1v1h-1zM12 9h1v1h-1zM3 10h1v1h-1zM10 11h1v1h-1zM13 11h1v1h-1zM3 12h1v1h-1zM8 12h1v1h-1zM1 14h1v1h-1z" fill="#ff2020"/></svg>
<svg style="left:578px;top:113px" width="17" height="17" shape-rendering="crispEdges"><path d="M0 0h16v1h-16zM0 1h1v1h-1zM15 1h1v1h-1zM0 2h1v1h-1zM15 2h1v1h-1zM0 3h1v1h-1zM15 3h1v1h-1zM0 4h1v1h-1zM15 4h1v1h-1zM0 5h1v1h-1zM15 5h1v1h-1zM0 6h1v1h-1zM6 6h10v1h-10zM0 7h1v1h-1zM6 7h1v1h-1zM15 7h1v1h-1zM0 8h1v1h-1zM6 8h1v1h-1zM15 8h1v1h-1zM0 9h1v1h-1zM6 9h1v1h-1zM15 9h1v1h-1zM0 10h1v1h-1zM6 10h1v1h-1zM15 10h1v1h-1zM0 11h1v1h-1zM6 11h1v1h-1zM15 11h1v1h-1zM0 12h1v1h-1zM6 12h1v1h-1zM15 12h1v1h-1zM0 13h1v1h-1zM6 13h1v1h-1zM15 13h1v1h-1zM0 14h1v1h-1zM6 14h1v1h-1zM15 14h1v1h-1zM0 15h16v1h-16z" fill="#000000"/><path d="M1 1h14v1h-14zM1 2h13v1h-13zM1 3h12v1h-12zM1 4h11v1h-11zM1 5h10v1h-10zM1 6h5v1h-5zM1 7h5v1h-5zM3 8h3v1h-3zM3 9h3v1h-3zM3 10h3v1h-3z" fill="#ffffd0"/><path d="M16 1h1v1h-1zM16 2h1v1h-1zM16 3h1v1h-1zM16 4h1v1h-1zM16 5h1v1h-1zM16 6h1v1h-1zM16 7h1v1h-1zM16 8h1v1h-1zM16 9h1v1h-1zM16 10h1v1h-1zM16 11h1v1h-1zM16 12h1v1h-1zM16 13h1v1h-1zM16 14h1v1h-1zM16 15h1v1h-1zM1 16h16v1h-16z" fill="#a8a49c"/><path d="M14 2h1v1h-1zM13 3h2v1h-2zM12 4h3v1h-3zM11 5h4v1h-4zM5 11h1v1h-1z" fill="#fff8b0"/><path d="M7 7h8v1h-8z" fill="#0010e0"/><path d="M1 8h2v1h-2zM1 9h2v1h-2zM1 10h2v1h-2zM1 11h2v1h-2zM8 11h1v1h-1zM1 12h2v1h-2zM5 12h1v1h-1zM1 13h2v1h-2zM5 13h1v1h-1zM1 14h2v1h-2zM5 14h1v1h-1z" fill="#00ff00"/><path d="M7 8h8v1h-8zM7 9h1v1h-1zM9 9h1v1h-1zM11 9h1v1h-1zM13 9h2v1h-2zM7 10h8v1h-8zM7 11h1v1h-1zM9 11h1v1h-1zM11 11h1v1h-1zM13 11h2v1h-2zM7 12h8v1h-8zM7 13h1v1h-1zM9 13h1v1h-1zM11 13h1v1h-1zM13 13h2v1h-2zM7 14h8v1h-8z" fill="#e8e8e8"/><path d="M8 9h1v1h-1zM12 9h1v1h-1zM10 11h1v1h-1zM12 11h1v1h-1zM8 13h1v1h-1zM10 13h1v1h-1z" fill="#ff2020"/><path d="M10 9h1v1h-1zM3 11h2v1h-2zM3 12h2v1h-2zM3 13h2v1h-2zM12 13h1v1h-1zM3 14h2v1h-2z" fill="#2040ff"/></svg>
<div style="position:absolute;left:52px;top:145px;width:492px;height:218px;background:linear-gradient(180deg,#000 0%,#141414 30%,#2a2a2a 70%,#404040 100%);"></div>
<div style="position:absolute;left:544px;top:145px;width:1px;height:218px;background:#e6e2da;"></div>
<svg style="left:0;top:0" width="758" height="509"><rect x="54" y="147" width="1" height="214" fill="#7c7c7c"/><rect x="78" y="147" width="1" height="214" fill="#4c4c4c"/><rect x="102" y="147" width="1" height="214" fill="#7c7c7c"/><rect x="127" y="147" width="1" height="214" fill="#4c4c4c"/><rect x="151" y="147" width="1" height="214" fill="#7c7c7c"/><rect x="176" y="147" width="1" height="214" fill="#4c4c4c"/><rect x="200" y="147" width="1" height="214" fill="#7c7c7c"/><rect x="224" y="147" width="1" height="214" fill="#4c4c4c"/><rect x="249" y="147" width="1" height="214" fill="#7c7c7c"/><rect x="273" y="147" width="1" height="214" fill="#4c4c4c"/><rect x="298" y="147" width="1" height="214" fill="#7c7c7c"/><rect x="322" y="147" width="1" height="214" fill="#4c4c4c"/><rect x="346" y="147" width="1" height="214" fill="#7c7c7c"/><rect x="371" y="147" width="1" height="214" fill="#4c4c4c"/><rect x="395" y="147" width="1" height="214" fill="#7c7c7c"/><rect x="420" y="147" width="1" height="214" fill="#4c4c4c"/><rect x="444" y="147" width="1" height="214" fill="#7c7c7c"/><rect x="468" y="147" width="1" height="214" fill="#4c4c4c"/><rect x="493" y="147" width="1" height="214" fill="#7c7c7c"/><rect x="517" y="147" width="1" height="214" fill="#4c4c4c"/><rect x="542" y="147" width="1" height="214" fill="#7c7c7c"/><rect x="54" y="158" width="489" height="1" fill="#545454"/><rect x="54" y="169" width="489" height="1" fill="#7c7c7c"/><rect x="54" y="180" width="489" height="1" fill="#545454"/><rect x="54" y="190" width="489" height="1" fill="#7c7c7c"/><rect x="54" y="201" width="489" height="1" fill="#545454"/><rect x="54" y="212" width="489" height="1" fill="#7c7c7c"/><rect x="54" y="222" width="489" height="1" fill="#545454"/><rect x="54" y="233" width="489" height="1" fill="#7c7c7c"/><rect x="54" y="244" width="489" height="1" fill="#545454"/><rect x="54" y="254" width="489" height="1" fill="#7c7c7c"/><rect x="54" y="265" width="489" height="1" fill="#545454"/><rect x="54" y="276" width="489" height="1" fill="#7c7c7c"/><rect x="54" y="286" width="489" height="1" fill="#545454"/><rect x="54" y="297" width="489" height="1" fill="#7c7c7c"/><rect x="54" y="308" width="489" height="1" fill="#545454"/><rect x="54" y="319" width="489" height="1" fill="#7c7c7c"/><rect x="54" y="329" width="489" height="1" fill="#545454"/><rect x="54" y="340" width="489" height="1" fill="#7c7c7c"/><rect x="54" y="351" width="489" height="1" fill="#545454"/><path d="M54 312h1v1h-1zM54 314h1v1h-1zM54 315h1v1h-1zM54 316h1v1h-1zM54 355h1v1h-1zM54 356h1v1h-1zM54 357h1v1h-1zM55 313h1v1h-1zM55 314h1v1h-1zM55 315h1v1h-1zM55 316h1v1h-1zM55 351h1v1h-1zM55 353h1v1h-1zM55 358h1v1h-1zM56 312h1v1h-1zM56 315h1v1h-1zM56 316h1v1h-1zM56 353h1v1h-1zM57 315h1v1h-1zM58 311h1v1h-1zM58 313h1v1h-1zM58 314h1v1h-1zM58 351h1v1h-1zM58 353h1v1h-1zM59 311h1v1h-1zM59 312h1v1h-1zM59 320h1v1h-1zM59 353h1v1h-1zM59 354h1v1h-1zM60 316h1v1h-1zM60 356h1v1h-1zM61 311h1v1h-1zM61 313h1v1h-1zM61 351h1v1h-1zM61 353h1v1h-1zM62 313h1v1h-1zM62 353h1v1h-1zM62 356h1v1h-1zM63 319h1v1h-1zM63 354h1v1h-1zM64 310h1v1h-1zM64 301h1v1h-1zM64 351h1v1h-1zM65 303h1v1h-1zM65 353h1v1h-1zM66 313h1v1h-1zM66 355h1v1h-1zM67 313h1v1h-1zM68 314h1v1h-1zM68 316h1v1h-1zM68 354h1v1h-1zM68 271h1v1h-1zM69 312h1v1h-1zM69 314h1v1h-1zM70 310h1v1h-1zM70 311h1v1h-1zM70 313h1v1h-1zM70 315h1v1h-1zM71 316h1v1h-1zM71 317h1v1h-1zM71 356h1v1h-1zM72 351h1v1h-1zM72 357h1v1h-1zM73 310h1v1h-1zM73 312h1v1h-1zM73 313h1v1h-1zM73 315h1v1h-1zM73 320h1v1h-1zM73 355h1v1h-1zM74 312h1v1h-1zM74 313h1v1h-1zM74 315h1v1h-1zM74 353h1v1h-1zM74 354h1v1h-1zM75 311h1v1h-1zM75 313h1v1h-1zM75 354h1v1h-1zM76 304h1v1h-1zM76 358h1v1h-1zM77 316h1v1h-1zM77 353h1v1h-1zM77 357h1v1h-1zM78 313h1v1h-1zM78 314h1v1h-1zM78 316h1v1h-1zM78 357h1v1h-1zM79 316h1v1h-1zM79 317h1v1h-1zM79 355h1v1h-1zM80 313h1v1h-1zM80 354h1v1h-1zM80 355h1v1h-1zM81 312h1v1h-1zM82 311h1v1h-1zM82 315h1v1h-1zM82 357h1v1h-1zM83 312h1v1h-1zM83 314h1v1h-1zM83 316h1v1h-1zM83 351h1v1h-1zM83 353h1v1h-1zM84 311h1v1h-1zM84 312h1v1h-1zM84 351h1v1h-1zM84 353h1v1h-1zM85 311h1v1h-1zM85 312h1v1h-1zM85 353h1v1h-1zM85 354h1v1h-1zM86 313h1v1h-1zM86 316h1v1h-1zM86 307h1v1h-1zM87 314h1v1h-1zM87 354h1v1h-1zM88 310h1v1h-1zM88 311h1v1h-1zM88 313h1v1h-1zM88 315h1v1h-1zM88 354h1v1h-1zM89 312h1v1h-1zM89 313h1v1h-1zM89 316h1v1h-1zM89 283h1v1h-1zM89 355h1v1h-1zM90 295h1v1h-1zM90 354h1v1h-1zM91 311h1v1h-1zM91 313h1v1h-1zM91 314h1v1h-1zM91 353h1v1h-1zM92 312h1v1h-1zM92 353h1v1h-1zM92 354h1v1h-1zM93 314h1v1h-1zM93 288h1v1h-1zM94 311h1v1h-1zM94 312h1v1h-1zM94 256h1v1h-1zM94 353h1v1h-1zM94 356h1v1h-1zM95 312h1v1h-1zM95 313h1v1h-1zM95 355h1v1h-1zM95 356h1v1h-1zM96 317h1v1h-1zM96 356h1v1h-1zM96 358h1v1h-1zM97 316h1v1h-1zM97 351h1v1h-1zM97 353h1v1h-1zM98 312h1v1h-1zM98 314h1v1h-1zM99 311h1v1h-1zM99 312h1v1h-1zM100 316h1v1h-1zM100 355h1v1h-1zM100 358h1v1h-1zM101 312h1v1h-1zM101 314h1v1h-1zM101 317h1v1h-1zM101 356h1v1h-1zM102 313h1v1h-1zM102 351h1v1h-1zM103 318h1v1h-1zM103 292h1v1h-1zM104 316h1v1h-1zM104 293h1v1h-1zM104 351h1v1h-1zM104 354h1v1h-1zM105 351h1v1h-1zM105 353h1v1h-1zM105 355h1v1h-1zM106 312h1v1h-1zM106 314h1v1h-1zM106 353h1v1h-1zM106 355h1v1h-1zM107 320h1v1h-1zM107 354h1v1h-1zM108 312h1v1h-1zM108 314h1v1h-1zM108 351h1v1h-1zM109 319h1v1h-1zM111 311h1v1h-1zM111 318h1v1h-1zM111 354h1v1h-1zM112 313h1v1h-1zM112 314h1v1h-1zM112 354h1v1h-1zM112 358h1v1h-1zM113 353h1v1h-1zM113 355h1v1h-1zM114 353h1v1h-1zM114 354h1v1h-1zM115 316h1v1h-1zM115 317h1v1h-1zM115 310h1v1h-1zM116 314h1v1h-1zM116 351h1v1h-1zM116 354h1v1h-1zM117 311h1v1h-1zM117 312h1v1h-1zM117 307h1v1h-1zM118 309h1v1h-1zM118 311h1v1h-1zM118 314h1v1h-1zM118 316h1v1h-1zM118 294h1v1h-1zM119 314h1v1h-1zM120 312h1v1h-1zM120 315h1v1h-1zM120 274h1v1h-1zM121 316h1v1h-1zM121 355h1v1h-1zM122 311h1v1h-1zM122 315h1v1h-1zM122 351h1v1h-1zM122 354h1v1h-1zM123 312h1v1h-1zM123 313h1v1h-1zM124 312h1v1h-1zM124 313h1v1h-1zM124 351h1v1h-1zM124 353h1v1h-1zM124 354h1v1h-1zM125 312h1v1h-1zM125 313h1v1h-1zM125 318h1v1h-1zM125 351h1v1h-1zM125 353h1v1h-1zM125 355h1v1h-1zM126 311h1v1h-1zM126 316h1v1h-1zM126 306h1v1h-1zM126 351h1v1h-1zM126 353h1v1h-1zM126 354h1v1h-1zM127 315h1v1h-1zM127 351h1v1h-1zM128 312h1v1h-1zM128 353h1v1h-1zM128 354h1v1h-1zM129 286h1v1h-1zM130 313h1v1h-1zM130 314h1v1h-1zM130 316h1v1h-1zM130 351h1v1h-1zM130 354h1v1h-1zM130 355h1v1h-1zM131 311h1v1h-1zM131 354h1v1h-1zM132 313h1v1h-1zM132 315h1v1h-1zM132 320h1v1h-1zM132 351h1v1h-1zM132 353h1v1h-1zM132 356h1v1h-1zM133 310h1v1h-1zM133 311h1v1h-1zM133 314h1v1h-1zM134 319h1v1h-1zM134 355h1v1h-1zM135 314h1v1h-1zM135 318h1v1h-1zM135 351h1v1h-1zM135 355h1v1h-1zM136 312h1v1h-1zM136 314h1v1h-1zM136 316h1v1h-1zM136 353h1v1h-1zM137 313h1v1h-1zM137 318h1v1h-1zM137 358h1v1h-1zM138 293h1v1h-1zM138 348h1v1h-1zM138 351h1v1h-1zM138 353h1v1h-1zM139 315h1v1h-1zM140 314h1v1h-1zM140 316h1v1h-1zM141 357h1v1h-1zM142 312h1v1h-1zM143 312h1v1h-1zM143 314h1v1h-1zM144 312h1v1h-1zM144 313h1v1h-1zM144 317h1v1h-1zM144 355h1v1h-1zM145 354h1v1h-1zM145 355h1v1h-1zM145 358h1v1h-1zM146 314h1v1h-1zM146 316h1v1h-1zM146 351h1v1h-1zM146 354h1v1h-1zM147 318h1v1h-1zM147 354h1v1h-1zM148 316h1v1h-1zM148 351h1v1h-1zM148 355h1v1h-1zM149 310h1v1h-1zM149 313h1v1h-1zM149 315h1v1h-1zM150 310h1v1h-1zM150 311h1v1h-1zM150 358h1v1h-1zM151 313h1v1h-1zM151 316h1v1h-1zM151 353h1v1h-1zM152 312h1v1h-1zM152 315h1v1h-1zM152 353h1v1h-1zM153 316h1v1h-1zM153 354h1v1h-1zM153 356h1v1h-1zM153 357h1v1h-1zM154 313h1v1h-1zM154 315h1v1h-1zM154 353h1v1h-1zM155 354h1v1h-1zM155 357h1v1h-1zM157 312h1v1h-1zM157 315h1v1h-1zM157 354h1v1h-1zM158 312h1v1h-1zM158 314h1v1h-1zM158 315h1v1h-1zM158 284h1v1h-1zM158 355h1v1h-1zM159 313h1v1h-1zM160 310h1v1h-1zM160 315h1v1h-1zM160 356h1v1h-1zM161 310h1v1h-1zM161 313h1v1h-1zM161 351h1v1h-1zM162 310h1v1h-1zM163 353h1v1h-1zM163 355h1v1h-1zM163 356h1v1h-1zM164 314h1v1h-1zM164 297h1v1h-1zM164 356h1v1h-1zM165 309h1v1h-1zM165 311h1v1h-1zM165 313h1v1h-1zM165 314h1v1h-1zM166 312h1v1h-1zM166 351h1v1h-1zM166 356h1v1h-1zM167 311h1v1h-1zM167 312h1v1h-1zM167 313h1v1h-1zM167 314h1v1h-1zM167 316h1v1h-1zM167 355h1v1h-1zM168 315h1v1h-1zM168 355h1v1h-1zM168 357h1v1h-1zM169 313h1v1h-1zM169 315h1v1h-1zM169 316h1v1h-1zM169 353h1v1h-1zM169 356h1v1h-1zM170 314h1v1h-1zM170 356h1v1h-1zM171 315h1v1h-1zM171 316h1v1h-1zM171 356h1v1h-1zM171 357h1v1h-1zM172 314h1v1h-1zM172 354h1v1h-1zM172 358h1v1h-1zM173 310h1v1h-1zM173 312h1v1h-1zM173 316h1v1h-1zM173 356h1v1h-1zM174 316h1v1h-1zM175 314h1v1h-1zM175 351h1v1h-1zM175 354h1v1h-1zM176 316h1v1h-1zM176 317h1v1h-1zM177 309h1v1h-1zM177 310h1v1h-1zM177 312h1v1h-1zM177 313h1v1h-1zM177 316h1v1h-1zM177 353h1v1h-1zM177 354h1v1h-1zM178 313h1v1h-1zM178 314h1v1h-1zM178 354h1v1h-1zM180 356h1v1h-1zM181 320h1v1h-1zM181 353h1v1h-1zM181 358h1v1h-1zM182 313h1v1h-1zM182 351h1v1h-1zM182 357h1v1h-1zM183 310h1v1h-1zM183 311h1v1h-1zM183 314h1v1h-1zM183 316h1v1h-1zM183 303h1v1h-1zM183 356h1v1h-1zM184 311h1v1h-1zM184 278h1v1h-1zM184 357h1v1h-1zM185 314h1v1h-1zM185 303h1v1h-1zM185 351h1v1h-1zM186 311h1v1h-1zM186 314h1v1h-1zM186 318h1v1h-1zM186 351h1v1h-1zM187 309h1v1h-1zM187 353h1v1h-1zM187 355h1v1h-1zM188 314h1v1h-1zM188 353h1v1h-1zM189 357h1v1h-1zM190 315h1v1h-1zM190 316h1v1h-1zM190 318h1v1h-1zM190 275h1v1h-1zM191 357h1v1h-1zM192 354h1v1h-1zM192 355h1v1h-1zM193 354h1v1h-1zM194 313h1v1h-1zM194 314h1v1h-1zM194 315h1v1h-1zM194 289h1v1h-1zM195 320h1v1h-1zM195 351h1v1h-1zM195 356h1v1h-1zM197 353h1v1h-1zM198 312h1v1h-1zM198 313h1v1h-1zM198 314h1v1h-1zM198 316h1v1h-1zM198 353h1v1h-1zM199 310h1v1h-1zM199 315h1v1h-1zM199 291h1v1h-1zM200 313h1v1h-1zM200 315h1v1h-1zM200 353h1v1h-1zM201 353h1v1h-1zM202 313h1v1h-1zM202 298h1v1h-1zM202 358h1v1h-1zM203 314h1v1h-1zM203 315h1v1h-1zM203 266h1v1h-1zM203 353h1v1h-1zM203 356h1v1h-1zM204 312h1v1h-1zM204 293h1v1h-1zM204 351h1v1h-1zM204 353h1v1h-1zM205 310h1v1h-1zM205 311h1v1h-1zM205 312h1v1h-1zM205 318h1v1h-1zM205 353h1v1h-1zM205 358h1v1h-1zM206 312h1v1h-1zM206 313h1v1h-1zM206 315h1v1h-1zM206 351h1v1h-1zM207 312h1v1h-1zM207 317h1v1h-1zM207 285h1v1h-1zM207 355h1v1h-1zM207 356h1v1h-1zM207 324h1v1h-1zM208 311h1v1h-1zM208 351h1v1h-1zM208 355h1v1h-1zM208 356h1v1h-1zM209 312h1v1h-1zM209 313h1v1h-1zM209 353h1v1h-1zM210 353h1v1h-1zM210 356h1v1h-1zM211 313h1v1h-1zM212 311h1v1h-1zM212 316h1v1h-1zM212 354h1v1h-1zM213 313h1v1h-1zM213 318h1v1h-1zM214 296h1v1h-1zM215 304h1v1h-1zM216 311h1v1h-1zM216 314h1v1h-1zM216 316h1v1h-1zM216 320h1v1h-1zM216 351h1v1h-1zM216 353h1v1h-1zM216 356h1v1h-1zM217 353h1v1h-1zM218 310h1v1h-1zM218 354h1v1h-1zM219 313h1v1h-1zM219 318h1v1h-1zM220 312h1v1h-1zM221 317h1v1h-1zM222 311h1v1h-1zM222 315h1v1h-1zM222 351h1v1h-1zM222 353h1v1h-1zM223 314h1v1h-1zM223 353h1v1h-1zM224 312h1v1h-1zM224 300h1v1h-1zM224 355h1v1h-1zM226 314h1v1h-1zM226 285h1v1h-1zM226 351h1v1h-1zM226 353h1v1h-1zM227 312h1v1h-1zM227 314h1v1h-1zM227 286h1v1h-1zM228 309h1v1h-1zM228 310h1v1h-1zM228 357h1v1h-1zM229 320h1v1h-1zM229 302h1v1h-1zM229 355h1v1h-1zM230 303h1v1h-1zM230 351h1v1h-1zM230 354h1v1h-1zM230 356h1v1h-1zM231 313h1v1h-1zM232 310h1v1h-1zM233 312h1v1h-1zM233 313h1v1h-1zM233 356h1v1h-1zM234 310h1v1h-1zM234 316h1v1h-1zM234 353h1v1h-1zM235 309h1v1h-1zM235 311h1v1h-1zM235 312h1v1h-1zM235 315h1v1h-1zM235 317h1v1h-1zM236 353h1v1h-1zM237 313h1v1h-1zM237 314h1v1h-1zM238 312h1v1h-1zM239 312h1v1h-1zM239 313h1v1h-1zM239 306h1v1h-1zM239 353h1v1h-1zM239 354h1v1h-1zM239 356h1v1h-1zM240 309h1v1h-1zM240 316h1v1h-1zM240 351h1v1h-1zM240 353h1v1h-1zM241 312h1v1h-1zM241 354h1v1h-1zM241 356h1v1h-1zM242 311h1v1h-1zM242 351h1v1h-1zM243 353h1v1h-1zM243 356h1v1h-1zM244 311h1v1h-1zM244 313h1v1h-1zM244 353h1v1h-1zM245 312h1v1h-1zM245 351h1v1h-1zM245 353h1v1h-1zM246 358h1v1h-1zM247 303h1v1h-1zM247 353h1v1h-1zM247 357h1v1h-1zM248 355h1v1h-1zM249 314h1v1h-1zM249 316h1v1h-1zM249 267h1v1h-1zM249 358h1v1h-1zM250 313h1v1h-1zM252 313h1v1h-1zM252 315h1v1h-1zM252 351h1v1h-1zM252 354h1v1h-1zM252 357h1v1h-1zM253 353h1v1h-1zM253 354h1v1h-1zM255 351h1v1h-1zM255 354h1v1h-1zM256 312h1v1h-1zM256 314h1v1h-1zM256 353h1v1h-1zM257 351h1v1h-1zM257 354h1v1h-1zM258 353h1v1h-1zM260 314h1v1h-1zM260 353h1v1h-1zM260 357h1v1h-1zM261 315h1v1h-1zM262 313h1v1h-1zM262 354h1v1h-1zM262 355h1v1h-1zM263 313h1v1h-1zM263 351h1v1h-1zM263 353h1v1h-1zM264 351h1v1h-1zM265 310h1v1h-1zM266 351h1v1h-1zM266 354h1v1h-1zM267 353h1v1h-1zM268 309h1v1h-1zM268 316h1v1h-1zM268 353h1v1h-1zM269 354h1v1h-1zM270 313h1v1h-1zM270 315h1v1h-1zM270 319h1v1h-1zM271 312h1v1h-1zM272 353h1v1h-1zM273 314h1v1h-1zM273 354h1v1h-1zM274 319h1v1h-1zM274 354h1v1h-1zM275 309h1v1h-1zM276 313h1v1h-1zM276 353h1v1h-1zM276 354h1v1h-1zM277 312h1v1h-1zM280 314h1v1h-1zM280 317h1v1h-1zM280 354h1v1h-1zM281 313h1v1h-1zM281 353h1v1h-1zM282 313h1v1h-1zM284 358h1v1h-1zM285 289h1v1h-1zM285 356h1v1h-1zM286 311h1v1h-1zM286 355h1v1h-1zM287 312h1v1h-1zM288 312h1v1h-1zM289 311h1v1h-1zM289 315h1v1h-1zM289 358h1v1h-1zM290 311h1v1h-1zM290 351h1v1h-1zM291 315h1v1h-1zM291 354h1v1h-1zM292 314h1v1h-1zM292 316h1v1h-1zM292 354h1v1h-1zM293 311h1v1h-1zM293 312h1v1h-1zM294 316h1v1h-1zM294 354h1v1h-1zM295 315h1v1h-1zM295 316h1v1h-1zM296 313h1v1h-1zM296 315h1v1h-1zM296 316h1v1h-1zM297 353h1v1h-1zM297 355h1v1h-1zM298 354h1v1h-1zM298 356h1v1h-1zM299 313h1v1h-1zM299 295h1v1h-1zM300 310h1v1h-1zM300 314h1v1h-1zM300 315h1v1h-1zM300 316h1v1h-1zM301 314h1v1h-1zM301 351h1v1h-1zM301 353h1v1h-1zM302 315h1v1h-1zM302 304h1v1h-1zM303 351h1v1h-1zM303 353h1v1h-1zM303 358h1v1h-1zM304 317h1v1h-1zM304 354h1v1h-1zM304 355h1v1h-1zM306 312h1v1h-1zM306 314h1v1h-1zM307 355h1v1h-1zM307 357h1v1h-1zM309 313h1v1h-1zM309 314h1v1h-1zM309 299h1v1h-1zM310 316h1v1h-1zM310 353h1v1h-1zM310 357h1v1h-1zM311 353h1v1h-1zM312 316h1v1h-1zM313 313h1v1h-1zM314 284h1v1h-1zM314 351h1v1h-1zM315 284h1v1h-1zM315 355h1v1h-1zM316 313h1v1h-1zM316 314h1v1h-1zM316 354h1v1h-1zM317 312h1v1h-1zM317 316h1v1h-1zM317 293h1v1h-1zM317 353h1v1h-1zM317 354h1v1h-1zM318 314h1v1h-1zM319 312h1v1h-1zM319 317h1v1h-1zM320 316h1v1h-1zM320 353h1v1h-1zM321 351h1v1h-1zM321 356h1v1h-1zM322 353h1v1h-1zM323 309h1v1h-1zM323 313h1v1h-1zM323 356h1v1h-1zM324 313h1v1h-1zM324 314h1v1h-1zM324 353h1v1h-1zM325 312h1v1h-1zM325 316h1v1h-1zM326 314h1v1h-1zM326 318h1v1h-1zM326 354h1v1h-1zM326 356h1v1h-1zM327 311h1v1h-1zM327 351h1v1h-1zM328 355h1v1h-1zM329 312h1v1h-1zM329 315h1v1h-1zM330 310h1v1h-1zM330 311h1v1h-1zM330 312h1v1h-1zM330 314h1v1h-1zM330 315h1v1h-1zM330 351h1v1h-1zM331 311h1v1h-1zM331 354h1v1h-1zM332 310h1v1h-1zM332 298h1v1h-1zM333 358h1v1h-1zM334 317h1v1h-1zM334 351h1v1h-1zM334 353h1v1h-1zM336 310h1v1h-1zM336 313h1v1h-1zM336 315h1v1h-1zM336 353h1v1h-1zM336 358h1v1h-1zM337 312h1v1h-1zM337 317h1v1h-1zM338 354h1v1h-1zM340 310h1v1h-1zM340 318h1v1h-1zM341 312h1v1h-1zM341 353h1v1h-1zM342 356h1v1h-1zM343 315h1v1h-1zM343 316h1v1h-1zM345 314h1v1h-1zM345 353h1v1h-1zM345 355h1v1h-1zM345 357h1v1h-1zM346 311h1v1h-1zM346 312h1v1h-1zM346 354h1v1h-1zM347 306h1v1h-1zM347 355h1v1h-1zM349 315h1v1h-1zM350 355h1v1h-1zM350 357h1v1h-1zM350 358h1v1h-1zM351 313h1v1h-1zM354 357h1v1h-1zM355 351h1v1h-1zM356 353h1v1h-1zM357 311h1v1h-1zM357 278h1v1h-1zM358 312h1v1h-1zM359 270h1v1h-1zM360 353h1v1h-1zM361 353h1v1h-1zM361 357h1v1h-1zM362 313h1v1h-1zM362 314h1v1h-1zM363 314h1v1h-1zM363 357h1v1h-1zM364 355h1v1h-1zM365 310h1v1h-1zM365 315h1v1h-1zM366 313h1v1h-1zM366 315h1v1h-1zM366 353h1v1h-1zM367 311h1v1h-1zM369 311h1v1h-1zM370 355h1v1h-1zM371 353h1v1h-1zM373 354h1v1h-1zM375 313h1v1h-1zM375 353h1v1h-1zM377 313h1v1h-1zM377 353h1v1h-1zM378 353h1v1h-1zM379 314h1v1h-1zM379 354h1v1h-1zM379 355h1v1h-1zM379 357h1v1h-1zM380 351h1v1h-1zM381 354h1v1h-1zM382 311h1v1h-1zM383 355h1v1h-1zM385 312h1v1h-1zM386 356h1v1h-1zM386 357h1v1h-1zM387 311h1v1h-1zM387 314h1v1h-1zM388 353h1v1h-1zM388 354h1v1h-1zM388 355h1v1h-1zM389 312h1v1h-1zM389 316h1v1h-1zM389 317h1v1h-1zM389 309h1v1h-1zM390 319h1v1h-1zM391 311h1v1h-1zM391 313h1v1h-1zM391 315h1v1h-1zM391 309h1v1h-1zM392 354h1v1h-1zM393 314h1v1h-1zM393 320h1v1h-1zM394 315h1v1h-1zM394 353h1v1h-1zM395 353h1v1h-1zM396 353h1v1h-1zM396 358h1v1h-1zM397 314h1v1h-1zM398 351h1v1h-1zM398 353h1v1h-1zM398 354h1v1h-1zM400 353h1v1h-1zM402 313h1v1h-1zM403 312h1v1h-1zM404 358h1v1h-1zM405 310h1v1h-1zM408 310h1v1h-1zM408 351h1v1h-1zM409 318h1v1h-1zM409 353h1v1h-1zM409 354h1v1h-1zM410 316h1v1h-1zM410 354h1v1h-1zM411 312h1v1h-1zM411 353h1v1h-1zM412 354h1v1h-1zM413 353h1v1h-1zM414 316h1v1h-1zM415 353h1v1h-1zM416 312h1v1h-1zM416 351h1v1h-1zM416 353h1v1h-1zM418 314h1v1h-1zM419 353h1v1h-1zM420 354h1v1h-1zM421 314h1v1h-1zM423 356h1v1h-1zM424 310h1v1h-1zM424 356h1v1h-1zM426 351h1v1h-1zM429 353h1v1h-1zM430 314h1v1h-1zM430 353h1v1h-1zM430 354h1v1h-1zM431 354h1v1h-1zM432 354h1v1h-1zM433 354h1v1h-1zM434 311h1v1h-1zM435 353h1v1h-1zM436 311h1v1h-1zM436 313h1v1h-1zM436 354h1v1h-1zM436 355h1v1h-1zM437 353h1v1h-1zM437 357h1v1h-1zM439 354h1v1h-1zM440 312h1v1h-1zM440 282h1v1h-1zM441 311h1v1h-1zM441 317h1v1h-1zM441 351h1v1h-1zM441 354h1v1h-1zM442 311h1v1h-1zM443 317h1v1h-1zM444 353h1v1h-1zM444 354h1v1h-1zM445 340h1v1h-1zM446 356h1v1h-1zM450 357h1v1h-1zM452 353h1v1h-1zM454 311h1v1h-1zM454 358h1v1h-1zM457 356h1v1h-1zM460 353h1v1h-1zM460 354h1v1h-1zM461 354h1v1h-1zM465 353h1v1h-1zM467 356h1v1h-1zM473 354h1v1h-1zM474 314h1v1h-1zM475 351h1v1h-1zM479 356h1v1h-1zM480 353h1v1h-1zM482 354h1v1h-1zM484 351h1v1h-1zM485 315h1v1h-1zM485 298h1v1h-1zM491 353h1v1h-1zM492 354h1v1h-1zM499 312h1v1h-1zM501 356h1v1h-1zM503 353h1v1h-1zM505 311h1v1h-1zM505 285h1v1h-1zM506 311h1v1h-1zM508 356h1v1h-1zM511 353h1v1h-1zM512 354h1v1h-1zM515 354h1v1h-1zM515 357h1v1h-1zM517 312h1v1h-1zM518 311h1v1h-1zM518 355h1v1h-1zM519 353h1v1h-1zM519 354h1v1h-1zM520 354h1v1h-1zM522 317h1v1h-1zM528 356h1v1h-1zM534 354h1v1h-1zM535 307h1v1h-1zM535 354h1v1h-1zM536 355h1v1h-1zM537 354h1v1h-1zM537 356h1v1h-1zM538 314h1v1h-1zM540 356h1v1h-1zM542 353h1v1h-1z" fill="#1e90ff"/><path d="M54 317h1v1h-1zM55 328h1v1h-1zM55 337h1v1h-1zM55 356h1v1h-1zM55 357h1v1h-1zM56 328h1v1h-1zM56 329h1v1h-1zM56 357h1v1h-1zM57 332h1v1h-1zM57 335h1v1h-1zM57 353h1v1h-1zM57 354h1v1h-1zM57 356h1v1h-1zM58 327h1v1h-1zM58 330h1v1h-1zM58 340h1v1h-1zM59 332h1v1h-1zM59 355h1v1h-1zM59 356h1v1h-1zM59 357h1v1h-1zM59 358h1v1h-1zM60 318h1v1h-1zM60 324h1v1h-1zM60 334h1v1h-1zM60 355h1v1h-1zM61 312h1v1h-1zM61 324h1v1h-1zM61 325h1v1h-1zM61 333h1v1h-1zM62 357h1v1h-1zM63 325h1v1h-1zM63 337h1v1h-1zM63 345h1v1h-1zM63 351h1v1h-1zM63 353h1v1h-1zM63 358h1v1h-1zM64 317h1v1h-1zM64 328h1v1h-1zM64 335h1v1h-1zM64 339h1v1h-1zM64 340h1v1h-1zM65 315h1v1h-1zM65 357h1v1h-1zM66 314h1v1h-1zM66 344h1v1h-1zM66 356h1v1h-1zM66 357h1v1h-1zM67 323h1v1h-1zM67 326h1v1h-1zM67 339h1v1h-1zM67 353h1v1h-1zM67 354h1v1h-1zM67 356h1v1h-1zM67 357h1v1h-1zM68 320h1v1h-1zM68 353h1v1h-1zM68 355h1v1h-1zM68 357h1v1h-1zM69 318h1v1h-1zM69 322h1v1h-1zM69 324h1v1h-1zM69 356h1v1h-1zM70 316h1v1h-1zM70 317h1v1h-1zM70 326h1v1h-1zM70 332h1v1h-1zM70 335h1v1h-1zM70 337h1v1h-1zM70 353h1v1h-1zM70 355h1v1h-1zM70 358h1v1h-1zM71 318h1v1h-1zM71 353h1v1h-1zM72 330h1v1h-1zM72 336h1v1h-1zM72 339h1v1h-1zM72 353h1v1h-1zM72 355h1v1h-1zM73 354h1v1h-1zM74 357h1v1h-1zM75 336h1v1h-1zM75 357h1v1h-1zM76 318h1v1h-1zM76 319h1v1h-1zM76 342h1v1h-1zM76 343h1v1h-1zM76 355h1v1h-1zM77 355h1v1h-1zM77 356h1v1h-1zM78 323h1v1h-1zM78 324h1v1h-1zM78 355h1v1h-1zM78 356h1v1h-1zM78 358h1v1h-1zM79 314h1v1h-1zM79 330h1v1h-1zM79 353h1v1h-1zM79 356h1v1h-1zM79 357h1v1h-1zM80 316h1v1h-1zM80 334h1v1h-1zM80 353h1v1h-1zM80 356h1v1h-1zM81 317h1v1h-1zM81 316h1v1h-1zM81 321h1v1h-1zM81 323h1v1h-1zM81 340h1v1h-1zM82 327h1v1h-1zM82 342h1v1h-1zM82 354h1v1h-1zM82 355h1v1h-1zM83 319h1v1h-1zM83 338h1v1h-1zM83 354h1v1h-1zM83 356h1v1h-1zM83 357h1v1h-1zM84 322h1v1h-1zM84 323h1v1h-1zM84 329h1v1h-1zM84 330h1v1h-1zM84 343h1v1h-1zM85 317h1v1h-1zM85 322h1v1h-1zM85 339h1v1h-1zM86 318h1v1h-1zM86 335h1v1h-1zM86 355h1v1h-1zM86 356h1v1h-1zM87 353h1v1h-1zM87 356h1v1h-1zM88 319h1v1h-1zM88 330h1v1h-1zM88 355h1v1h-1zM89 317h1v1h-1zM89 318h1v1h-1zM89 353h1v1h-1zM89 357h1v1h-1zM90 317h1v1h-1zM90 318h1v1h-1zM90 335h1v1h-1zM90 353h1v1h-1zM90 355h1v1h-1zM91 351h1v1h-1zM91 355h1v1h-1zM92 336h1v1h-1zM92 337h1v1h-1zM92 356h1v1h-1zM93 327h1v1h-1zM93 357h1v1h-1zM94 331h1v1h-1zM94 338h1v1h-1zM94 342h1v1h-1zM94 355h1v1h-1zM94 358h1v1h-1zM95 317h1v1h-1zM95 322h1v1h-1zM95 326h1v1h-1zM95 331h1v1h-1zM96 354h1v1h-1zM96 355h1v1h-1zM97 314h1v1h-1zM97 354h1v1h-1zM97 355h1v1h-1zM97 357h1v1h-1zM98 317h1v1h-1zM98 332h1v1h-1zM98 336h1v1h-1zM98 353h1v1h-1zM98 355h1v1h-1zM99 335h1v1h-1zM99 343h1v1h-1zM99 356h1v1h-1zM100 318h1v1h-1zM100 320h1v1h-1zM100 333h1v1h-1zM100 345h1v1h-1zM100 353h1v1h-1zM100 354h1v1h-1zM100 356h1v1h-1zM101 318h1v1h-1zM101 320h1v1h-1zM101 327h1v1h-1zM101 340h1v1h-1zM101 351h1v1h-1zM102 322h1v1h-1zM103 320h1v1h-1zM103 333h1v1h-1zM104 313h1v1h-1zM104 317h1v1h-1zM104 319h1v1h-1zM104 355h1v1h-1zM104 356h1v1h-1zM105 311h1v1h-1zM105 320h1v1h-1zM105 332h1v1h-1zM105 357h1v1h-1zM106 315h1v1h-1zM106 318h1v1h-1zM106 334h1v1h-1zM107 339h1v1h-1zM107 353h1v1h-1zM107 355h1v1h-1zM108 341h1v1h-1zM108 358h1v1h-1zM109 314h1v1h-1zM109 320h1v1h-1zM109 328h1v1h-1zM109 358h1v1h-1zM110 331h1v1h-1zM110 351h1v1h-1zM110 354h1v1h-1zM112 317h1v1h-1zM112 320h1v1h-1zM113 354h1v1h-1zM114 318h1v1h-1zM114 316h1v1h-1zM114 326h1v1h-1zM114 341h1v1h-1zM114 355h1v1h-1zM114 357h1v1h-1zM115 334h1v1h-1zM115 353h1v1h-1zM115 355h1v1h-1zM116 317h1v1h-1zM116 341h1v1h-1zM116 353h1v1h-1zM116 356h1v1h-1zM117 335h1v1h-1zM117 339h1v1h-1zM117 355h1v1h-1zM118 319h1v1h-1zM118 326h1v1h-1zM118 331h1v1h-1zM118 344h1v1h-1zM118 354h1v1h-1zM118 355h1v1h-1zM119 353h1v1h-1zM120 322h1v1h-1zM120 327h1v1h-1zM120 355h1v1h-1zM120 356h1v1h-1zM121 320h1v1h-1zM121 322h1v1h-1zM121 327h1v1h-1zM121 354h1v1h-1zM122 316h1v1h-1zM122 335h1v1h-1zM123 317h1v1h-1zM123 356h1v1h-1zM123 357h1v1h-1zM124 318h1v1h-1zM124 328h1v1h-1zM124 337h1v1h-1zM124 338h1v1h-1zM124 339h1v1h-1zM125 311h1v1h-1zM125 327h1v1h-1zM125 328h1v1h-1zM125 356h1v1h-1zM125 358h1v1h-1zM126 356h1v1h-1zM127 314h1v1h-1zM127 332h1v1h-1zM127 356h1v1h-1zM128 319h1v1h-1zM128 334h1v1h-1zM128 356h1v1h-1zM128 358h1v1h-1zM129 315h1v1h-1zM129 331h1v1h-1zM130 318h1v1h-1zM130 320h1v1h-1zM130 331h1v1h-1zM132 321h1v1h-1zM132 342h1v1h-1zM132 358h1v1h-1zM133 344h1v1h-1zM133 353h1v1h-1zM134 318h1v1h-1zM134 353h1v1h-1zM134 354h1v1h-1zM134 356h1v1h-1zM135 317h1v1h-1zM135 353h1v1h-1zM136 331h1v1h-1zM136 337h1v1h-1zM136 344h1v1h-1zM136 358h1v1h-1zM137 317h1v1h-1zM137 325h1v1h-1zM137 341h1v1h-1zM138 317h1v1h-1zM138 318h1v1h-1zM138 315h1v1h-1zM138 327h1v1h-1zM138 358h1v1h-1zM140 336h1v1h-1zM140 353h1v1h-1zM140 355h1v1h-1zM140 356h1v1h-1zM141 317h1v1h-1zM141 334h1v1h-1zM141 336h1v1h-1zM141 354h1v1h-1zM141 356h1v1h-1zM141 358h1v1h-1zM142 316h1v1h-1zM142 322h1v1h-1zM142 325h1v1h-1zM142 353h1v1h-1zM142 355h1v1h-1zM143 332h1v1h-1zM143 340h1v1h-1zM143 351h1v1h-1zM143 353h1v1h-1zM143 355h1v1h-1zM144 326h1v1h-1zM144 331h1v1h-1zM145 318h1v1h-1zM145 315h1v1h-1zM145 356h1v1h-1zM146 353h1v1h-1zM146 355h1v1h-1zM146 356h1v1h-1zM147 326h1v1h-1zM148 354h1v1h-1zM148 356h1v1h-1zM149 327h1v1h-1zM149 339h1v1h-1zM150 314h1v1h-1zM150 328h1v1h-1zM150 351h1v1h-1zM150 353h1v1h-1zM150 354h1v1h-1zM151 326h1v1h-1zM151 336h1v1h-1zM151 345h1v1h-1zM151 355h1v1h-1zM151 357h1v1h-1zM152 341h1v1h-1zM152 343h1v1h-1zM152 345h1v1h-1zM152 355h1v1h-1zM153 315h1v1h-1zM153 322h1v1h-1zM153 330h1v1h-1zM153 339h1v1h-1zM153 358h1v1h-1zM154 335h1v1h-1zM154 343h1v1h-1zM154 345h1v1h-1zM154 354h1v1h-1zM154 356h1v1h-1zM155 317h1v1h-1zM155 351h1v1h-1zM155 353h1v1h-1zM155 356h1v1h-1zM156 322h1v1h-1zM156 336h1v1h-1zM156 345h1v1h-1zM156 356h1v1h-1zM157 317h1v1h-1zM157 321h1v1h-1zM157 338h1v1h-1zM157 355h1v1h-1zM157 358h1v1h-1zM158 318h1v1h-1zM158 329h1v1h-1zM158 351h1v1h-1zM158 354h1v1h-1zM159 316h1v1h-1zM159 338h1v1h-1zM159 355h1v1h-1zM159 356h1v1h-1zM160 318h1v1h-1zM160 324h1v1h-1zM160 336h1v1h-1zM160 355h1v1h-1zM161 320h1v1h-1zM161 322h1v1h-1zM161 356h1v1h-1zM161 357h1v1h-1zM161 358h1v1h-1zM162 312h1v1h-1zM162 320h1v1h-1zM162 354h1v1h-1zM162 355h1v1h-1zM162 356h1v1h-1zM163 315h1v1h-1zM163 358h1v1h-1zM164 336h1v1h-1zM164 354h1v1h-1zM164 355h1v1h-1zM165 335h1v1h-1zM165 336h1v1h-1zM165 354h1v1h-1zM165 357h1v1h-1zM166 317h1v1h-1zM166 328h1v1h-1zM166 354h1v1h-1zM166 357h1v1h-1zM167 339h1v1h-1zM167 351h1v1h-1zM167 358h1v1h-1zM168 330h1v1h-1zM168 338h1v1h-1zM168 356h1v1h-1zM169 354h1v1h-1zM169 355h1v1h-1zM170 319h1v1h-1zM170 332h1v1h-1zM170 354h1v1h-1zM171 317h1v1h-1zM171 328h1v1h-1zM171 341h1v1h-1zM171 353h1v1h-1zM171 354h1v1h-1zM171 355h1v1h-1zM171 358h1v1h-1zM172 317h1v1h-1zM173 315h1v1h-1zM173 317h1v1h-1zM173 324h1v1h-1zM173 332h1v1h-1zM174 341h1v1h-1zM174 351h1v1h-1zM174 353h1v1h-1zM175 318h1v1h-1zM175 321h1v1h-1zM175 333h1v1h-1zM175 342h1v1h-1zM175 353h1v1h-1zM175 355h1v1h-1zM176 353h1v1h-1zM176 356h1v1h-1zM176 357h1v1h-1zM176 358h1v1h-1zM177 356h1v1h-1zM178 330h1v1h-1zM178 358h1v1h-1zM179 319h1v1h-1zM179 322h1v1h-1zM179 326h1v1h-1zM179 354h1v1h-1zM180 325h1v1h-1zM180 351h1v1h-1zM180 354h1v1h-1zM180 355h1v1h-1zM180 357h1v1h-1zM180 358h1v1h-1zM181 315h1v1h-1zM181 318h1v1h-1zM181 330h1v1h-1zM181 334h1v1h-1zM181 356h1v1h-1zM182 321h1v1h-1zM182 330h1v1h-1zM182 353h1v1h-1zM182 354h1v1h-1zM182 355h1v1h-1zM183 332h1v1h-1zM183 351h1v1h-1zM184 340h1v1h-1zM184 355h1v1h-1zM185 329h1v1h-1zM185 333h1v1h-1zM185 339h1v1h-1zM185 355h1v1h-1zM186 341h1v1h-1zM186 353h1v1h-1zM187 317h1v1h-1zM187 320h1v1h-1zM187 321h1v1h-1zM187 356h1v1h-1zM188 316h1v1h-1zM188 324h1v1h-1zM188 327h1v1h-1zM188 354h1v1h-1zM188 355h1v1h-1zM189 353h1v1h-1zM189 354h1v1h-1zM189 356h1v1h-1zM189 358h1v1h-1zM190 327h1v1h-1zM190 335h1v1h-1zM190 356h1v1h-1zM191 318h1v1h-1zM191 341h1v1h-1zM191 353h1v1h-1zM191 356h1v1h-1zM191 358h1v1h-1zM192 314h1v1h-1zM192 322h1v1h-1zM192 353h1v1h-1zM193 313h1v1h-1zM193 327h1v1h-1zM193 334h1v1h-1zM193 353h1v1h-1zM193 358h1v1h-1zM194 317h1v1h-1zM194 323h1v1h-1zM194 353h1v1h-1zM194 354h1v1h-1zM195 317h1v1h-1zM195 326h1v1h-1zM196 317h1v1h-1zM196 339h1v1h-1zM196 340h1v1h-1zM196 342h1v1h-1zM196 344h1v1h-1zM196 353h1v1h-1zM196 354h1v1h-1zM196 355h1v1h-1zM196 356h1v1h-1zM197 334h1v1h-1zM197 351h1v1h-1zM197 354h1v1h-1zM198 343h1v1h-1zM198 354h1v1h-1zM198 356h1v1h-1zM199 313h1v1h-1zM199 354h1v1h-1zM199 355h1v1h-1zM199 356h1v1h-1zM200 322h1v1h-1zM200 358h1v1h-1zM201 354h1v1h-1zM201 358h1v1h-1zM202 336h1v1h-1zM202 353h1v1h-1zM203 317h1v1h-1zM203 322h1v1h-1zM203 327h1v1h-1zM203 330h1v1h-1zM203 342h1v1h-1zM203 354h1v1h-1zM204 317h1v1h-1zM204 314h1v1h-1zM204 356h1v1h-1zM204 358h1v1h-1zM205 334h1v1h-1zM205 351h1v1h-1zM205 354h1v1h-1zM205 355h1v1h-1zM205 356h1v1h-1zM206 318h1v1h-1zM206 334h1v1h-1zM206 344h1v1h-1zM206 345h1v1h-1zM206 355h1v1h-1zM206 356h1v1h-1zM206 358h1v1h-1zM207 351h1v1h-1zM208 322h1v1h-1zM208 326h1v1h-1zM208 333h1v1h-1zM208 340h1v1h-1zM208 343h1v1h-1zM208 357h1v1h-1zM209 314h1v1h-1zM209 342h1v1h-1zM209 343h1v1h-1zM209 354h1v1h-1zM209 356h1v1h-1zM209 357h1v1h-1zM209 358h1v1h-1zM210 355h1v1h-1zM211 353h1v1h-1zM211 357h1v1h-1zM212 318h1v1h-1zM212 314h1v1h-1zM212 338h1v1h-1zM212 339h1v1h-1zM212 342h1v1h-1zM213 319h1v1h-1zM213 334h1v1h-1zM213 355h1v1h-1zM214 334h1v1h-1zM214 355h1v1h-1zM214 356h1v1h-1zM215 318h1v1h-1zM215 342h1v1h-1zM215 356h1v1h-1zM216 318h1v1h-1zM216 334h1v1h-1zM216 357h1v1h-1zM217 319h1v1h-1zM217 322h1v1h-1zM217 327h1v1h-1zM217 335h1v1h-1zM217 355h1v1h-1zM217 358h1v1h-1zM218 327h1v1h-1zM218 341h1v1h-1zM218 353h1v1h-1zM218 356h1v1h-1zM219 314h1v1h-1zM219 331h1v1h-1zM219 341h1v1h-1zM219 351h1v1h-1zM219 357h1v1h-1zM220 344h1v1h-1zM220 351h1v1h-1zM220 356h1v1h-1zM220 358h1v1h-1zM221 312h1v1h-1zM221 316h1v1h-1zM221 314h1v1h-1zM221 330h1v1h-1zM221 334h1v1h-1zM221 353h1v1h-1zM221 356h1v1h-1zM221 357h1v1h-1zM222 337h1v1h-1zM222 355h1v1h-1zM222 356h1v1h-1zM223 322h1v1h-1zM223 355h1v1h-1zM225 319h1v1h-1zM225 316h1v1h-1zM225 343h1v1h-1zM225 355h1v1h-1zM225 356h1v1h-1zM225 358h1v1h-1zM226 355h1v1h-1zM226 356h1v1h-1zM226 358h1v1h-1zM227 321h1v1h-1zM227 336h1v1h-1zM227 340h1v1h-1zM227 343h1v1h-1zM227 354h1v1h-1zM227 355h1v1h-1zM228 332h1v1h-1zM228 340h1v1h-1zM228 351h1v1h-1zM228 354h1v1h-1zM228 355h1v1h-1zM229 343h1v1h-1zM230 357h1v1h-1zM231 317h1v1h-1zM231 318h1v1h-1zM231 323h1v1h-1zM231 342h1v1h-1zM231 343h1v1h-1zM231 356h1v1h-1zM232 314h1v1h-1zM232 323h1v1h-1zM232 325h1v1h-1zM232 342h1v1h-1zM232 353h1v1h-1zM232 354h1v1h-1zM233 323h1v1h-1zM233 331h1v1h-1zM233 355h1v1h-1zM233 357h1v1h-1zM234 317h1v1h-1zM234 319h1v1h-1zM234 339h1v1h-1zM234 354h1v1h-1zM234 355h1v1h-1zM234 356h1v1h-1zM235 355h1v1h-1zM236 323h1v1h-1zM236 332h1v1h-1zM236 335h1v1h-1zM236 336h1v1h-1zM236 339h1v1h-1zM236 356h1v1h-1zM236 357h1v1h-1zM237 319h1v1h-1zM237 353h1v1h-1zM238 353h1v1h-1zM238 355h1v1h-1zM239 320h1v1h-1zM239 345h1v1h-1zM239 355h1v1h-1zM240 315h1v1h-1zM240 323h1v1h-1zM242 317h1v1h-1zM242 323h1v1h-1zM242 332h1v1h-1zM242 341h1v1h-1zM242 354h1v1h-1zM242 355h1v1h-1zM243 309h1v1h-1zM243 354h1v1h-1zM244 309h1v1h-1zM244 334h1v1h-1zM244 335h1v1h-1zM244 355h1v1h-1zM244 356h1v1h-1zM245 324h1v1h-1zM245 354h1v1h-1zM245 356h1v1h-1zM245 358h1v1h-1zM246 321h1v1h-1zM246 340h1v1h-1zM246 351h1v1h-1zM246 354h1v1h-1zM246 356h1v1h-1zM246 357h1v1h-1zM247 315h1v1h-1zM247 341h1v1h-1zM247 344h1v1h-1zM247 354h1v1h-1zM247 356h1v1h-1zM247 358h1v1h-1zM248 309h1v1h-1zM248 318h1v1h-1zM248 334h1v1h-1zM248 353h1v1h-1zM248 354h1v1h-1zM248 356h1v1h-1zM248 357h1v1h-1zM249 317h1v1h-1zM249 322h1v1h-1zM249 329h1v1h-1zM249 345h1v1h-1zM249 355h1v1h-1zM249 356h1v1h-1zM250 317h1v1h-1zM250 353h1v1h-1zM250 357h1v1h-1zM251 317h1v1h-1zM251 341h1v1h-1zM251 355h1v1h-1zM253 328h1v1h-1zM253 333h1v1h-1zM253 335h1v1h-1zM253 356h1v1h-1zM254 320h1v1h-1zM254 357h1v1h-1zM255 357h1v1h-1zM256 315h1v1h-1zM256 316h1v1h-1zM256 324h1v1h-1zM256 327h1v1h-1zM256 329h1v1h-1zM257 355h1v1h-1zM257 356h1v1h-1zM258 356h1v1h-1zM259 353h1v1h-1zM259 354h1v1h-1zM259 355h1v1h-1zM259 356h1v1h-1zM259 357h1v1h-1zM260 320h1v1h-1zM260 323h1v1h-1zM262 335h1v1h-1zM262 356h1v1h-1zM263 316h1v1h-1zM263 331h1v1h-1zM264 314h1v1h-1zM264 329h1v1h-1zM264 353h1v1h-1zM264 354h1v1h-1zM265 318h1v1h-1zM265 314h1v1h-1zM265 332h1v1h-1zM265 353h1v1h-1zM265 355h1v1h-1zM266 330h1v1h-1zM266 336h1v1h-1zM268 318h1v1h-1zM268 345h1v1h-1zM269 316h1v1h-1zM270 317h1v1h-1zM270 355h1v1h-1zM271 353h1v1h-1zM271 356h1v1h-1zM272 325h1v1h-1zM272 333h1v1h-1zM272 339h1v1h-1zM272 354h1v1h-1zM273 353h1v1h-1zM273 355h1v1h-1zM274 338h1v1h-1zM274 355h1v1h-1zM275 318h1v1h-1zM275 320h1v1h-1zM276 324h1v1h-1zM276 338h1v1h-1zM276 341h1v1h-1zM276 357h1v1h-1zM277 351h1v1h-1zM277 357h1v1h-1zM278 314h1v1h-1zM278 344h1v1h-1zM278 357h1v1h-1zM279 342h1v1h-1zM279 355h1v1h-1zM281 318h1v1h-1zM281 322h1v1h-1zM281 324h1v1h-1zM281 339h1v1h-1zM281 358h1v1h-1zM282 319h1v1h-1zM282 318h1v1h-1zM282 355h1v1h-1zM282 356h1v1h-1zM283 353h1v1h-1zM284 320h1v1h-1zM284 343h1v1h-1zM284 353h1v1h-1zM285 318h1v1h-1zM285 351h1v1h-1zM285 355h1v1h-1zM285 358h1v1h-1zM286 318h1v1h-1zM286 322h1v1h-1zM286 356h1v1h-1zM287 323h1v1h-1zM288 354h1v1h-1zM288 355h1v1h-1zM290 315h1v1h-1zM290 332h1v1h-1zM290 353h1v1h-1zM291 324h1v1h-1zM291 345h1v1h-1zM292 356h1v1h-1zM293 323h1v1h-1zM293 337h1v1h-1zM294 325h1v1h-1zM294 328h1v1h-1zM294 357h1v1h-1zM294 358h1v1h-1zM295 342h1v1h-1zM297 324h1v1h-1zM297 338h1v1h-1zM298 317h1v1h-1zM298 351h1v1h-1zM299 333h1v1h-1zM299 353h1v1h-1zM300 353h1v1h-1zM301 324h1v1h-1zM301 357h1v1h-1zM302 354h1v1h-1zM303 343h1v1h-1zM303 344h1v1h-1zM305 325h1v1h-1zM305 336h1v1h-1zM305 337h1v1h-1zM305 353h1v1h-1zM306 318h1v1h-1zM306 354h1v1h-1zM307 314h1v1h-1zM307 320h1v1h-1zM308 317h1v1h-1zM308 329h1v1h-1zM308 355h1v1h-1zM309 333h1v1h-1zM309 334h1v1h-1zM309 336h1v1h-1zM309 344h1v1h-1zM309 353h1v1h-1zM309 357h1v1h-1zM310 340h1v1h-1zM311 336h1v1h-1zM311 342h1v1h-1zM311 354h1v1h-1zM311 357h1v1h-1zM311 358h1v1h-1zM312 353h1v1h-1zM313 319h1v1h-1zM313 336h1v1h-1zM314 356h1v1h-1zM315 330h1v1h-1zM315 353h1v1h-1zM316 334h1v1h-1zM316 343h1v1h-1zM316 344h1v1h-1zM316 358h1v1h-1zM317 322h1v1h-1zM317 323h1v1h-1zM317 351h1v1h-1zM317 358h1v1h-1zM318 353h1v1h-1zM318 354h1v1h-1zM318 357h1v1h-1zM319 326h1v1h-1zM319 337h1v1h-1zM319 340h1v1h-1zM319 353h1v1h-1zM319 356h1v1h-1zM321 331h1v1h-1zM323 326h1v1h-1zM323 334h1v1h-1zM323 338h1v1h-1zM323 355h1v1h-1zM325 329h1v1h-1zM325 353h1v1h-1zM325 354h1v1h-1zM325 356h1v1h-1zM326 329h1v1h-1zM326 355h1v1h-1zM327 357h1v1h-1zM328 340h1v1h-1zM328 344h1v1h-1zM328 356h1v1h-1zM329 338h1v1h-1zM329 351h1v1h-1zM329 353h1v1h-1zM330 356h1v1h-1zM331 356h1v1h-1zM332 319h1v1h-1zM332 325h1v1h-1zM332 339h1v1h-1zM332 340h1v1h-1zM332 355h1v1h-1zM332 358h1v1h-1zM333 317h1v1h-1zM333 354h1v1h-1zM334 322h1v1h-1zM334 330h1v1h-1zM334 354h1v1h-1zM334 355h1v1h-1zM335 321h1v1h-1zM336 314h1v1h-1zM336 331h1v1h-1zM336 354h1v1h-1zM336 355h1v1h-1zM337 353h1v1h-1zM338 316h1v1h-1zM338 325h1v1h-1zM338 335h1v1h-1zM339 334h1v1h-1zM339 358h1v1h-1zM340 339h1v1h-1zM341 332h1v1h-1zM342 328h1v1h-1zM342 341h1v1h-1zM342 354h1v1h-1zM343 326h1v1h-1zM345 323h1v1h-1zM345 332h1v1h-1zM345 351h1v1h-1zM346 355h1v1h-1zM346 356h1v1h-1zM347 345h1v1h-1zM348 335h1v1h-1zM348 343h1v1h-1zM348 355h1v1h-1zM348 356h1v1h-1zM349 324h1v1h-1zM349 333h1v1h-1zM349 354h1v1h-1zM349 358h1v1h-1zM350 330h1v1h-1zM350 333h1v1h-1zM353 332h1v1h-1zM354 319h1v1h-1zM355 318h1v1h-1zM355 320h1v1h-1zM355 321h1v1h-1zM355 327h1v1h-1zM355 353h1v1h-1zM356 339h1v1h-1zM356 345h1v1h-1zM357 327h1v1h-1zM357 358h1v1h-1zM360 312h1v1h-1zM360 326h1v1h-1zM360 333h1v1h-1zM360 355h1v1h-1zM360 358h1v1h-1zM361 315h1v1h-1zM361 330h1v1h-1zM361 344h1v1h-1zM363 333h1v1h-1zM363 353h1v1h-1zM365 317h1v1h-1zM365 321h1v1h-1zM365 324h1v1h-1zM365 338h1v1h-1zM365 357h1v1h-1zM366 341h1v1h-1zM366 344h1v1h-1zM367 318h1v1h-1zM367 354h1v1h-1zM367 356h1v1h-1zM368 329h1v1h-1zM368 345h1v1h-1zM369 319h1v1h-1zM369 332h1v1h-1zM369 356h1v1h-1zM371 316h1v1h-1zM372 318h1v1h-1zM372 353h1v1h-1zM372 354h1v1h-1zM372 358h1v1h-1zM374 316h1v1h-1zM375 332h1v1h-1zM376 354h1v1h-1zM378 333h1v1h-1zM379 315h1v1h-1zM380 337h1v1h-1zM380 354h1v1h-1zM380 355h1v1h-1zM380 357h1v1h-1zM381 315h1v1h-1zM381 336h1v1h-1zM382 330h1v1h-1zM383 338h1v1h-1zM384 338h1v1h-1zM384 351h1v1h-1zM385 318h1v1h-1zM385 355h1v1h-1zM386 353h1v1h-1zM387 356h1v1h-1zM388 332h1v1h-1zM389 355h1v1h-1zM389 357h1v1h-1zM390 354h1v1h-1zM391 356h1v1h-1zM393 317h1v1h-1zM393 318h1v1h-1zM393 353h1v1h-1zM394 316h1v1h-1zM394 354h1v1h-1zM394 356h1v1h-1zM395 320h1v1h-1zM395 342h1v1h-1zM396 319h1v1h-1zM396 354h1v1h-1zM397 356h1v1h-1zM398 317h1v1h-1zM398 318h1v1h-1zM398 356h1v1h-1zM399 318h1v1h-1zM399 316h1v1h-1zM399 329h1v1h-1zM399 330h1v1h-1zM401 317h1v1h-1zM401 340h1v1h-1zM401 358h1v1h-1zM402 324h1v1h-1zM402 355h1v1h-1zM402 356h1v1h-1zM403 354h1v1h-1zM403 356h1v1h-1zM404 330h1v1h-1zM404 342h1v1h-1zM404 354h1v1h-1zM405 330h1v1h-1zM407 320h1v1h-1zM408 329h1v1h-1zM408 356h1v1h-1zM409 357h1v1h-1zM409 358h1v1h-1zM410 318h1v1h-1zM410 319h1v1h-1zM410 345h1v1h-1zM410 355h1v1h-1zM411 314h1v1h-1zM411 358h1v1h-1zM412 358h1v1h-1zM413 357h1v1h-1zM414 317h1v1h-1zM415 342h1v1h-1zM415 355h1v1h-1zM416 320h1v1h-1zM416 329h1v1h-1zM416 339h1v1h-1zM417 314h1v1h-1zM418 344h1v1h-1zM418 345h1v1h-1zM418 355h1v1h-1zM422 317h1v1h-1zM423 335h1v1h-1zM423 340h1v1h-1zM423 355h1v1h-1zM424 317h1v1h-1zM424 337h1v1h-1zM426 323h1v1h-1zM426 338h1v1h-1zM426 355h1v1h-1zM427 335h1v1h-1zM427 355h1v1h-1zM428 335h1v1h-1zM429 318h1v1h-1zM429 335h1v1h-1zM429 356h1v1h-1zM429 357h1v1h-1zM431 321h1v1h-1zM431 353h1v1h-1zM432 355h1v1h-1zM433 342h1v1h-1zM434 327h1v1h-1zM434 355h1v1h-1zM435 313h1v1h-1zM437 317h1v1h-1zM438 316h1v1h-1zM439 330h1v1h-1zM439 341h1v1h-1zM439 355h1v1h-1zM440 331h1v1h-1zM440 356h1v1h-1zM441 319h1v1h-1zM441 323h1v1h-1zM441 334h1v1h-1zM444 333h1v1h-1zM444 356h1v1h-1zM445 327h1v1h-1zM445 355h1v1h-1zM446 355h1v1h-1zM447 340h1v1h-1zM448 314h1v1h-1zM448 343h1v1h-1zM449 357h1v1h-1zM450 355h1v1h-1zM451 315h1v1h-1zM451 355h1v1h-1zM451 358h1v1h-1zM453 355h1v1h-1zM453 358h1v1h-1zM455 331h1v1h-1zM455 357h1v1h-1zM456 334h1v1h-1zM456 343h1v1h-1zM458 326h1v1h-1zM458 343h1v1h-1zM459 355h1v1h-1zM460 314h1v1h-1zM460 337h1v1h-1zM461 331h1v1h-1zM461 356h1v1h-1zM463 321h1v1h-1zM464 354h1v1h-1zM464 358h1v1h-1zM466 329h1v1h-1zM467 328h1v1h-1zM468 341h1v1h-1zM468 354h1v1h-1zM471 333h1v1h-1zM471 356h1v1h-1zM472 354h1v1h-1zM472 356h1v1h-1zM473 341h1v1h-1zM473 355h1v1h-1zM475 339h1v1h-1zM477 355h1v1h-1zM477 358h1v1h-1zM478 324h1v1h-1zM479 322h1v1h-1zM479 337h1v1h-1zM480 326h1v1h-1zM480 341h1v1h-1zM480 342h1v1h-1zM480 356h1v1h-1zM481 316h1v1h-1zM481 319h1v1h-1zM481 331h1v1h-1zM483 318h1v1h-1zM483 342h1v1h-1zM483 355h1v1h-1zM484 329h1v1h-1zM485 356h1v1h-1zM486 337h1v1h-1zM486 354h1v1h-1zM487 340h1v1h-1zM487 354h1v1h-1zM489 321h1v1h-1zM489 357h1v1h-1zM490 325h1v1h-1zM491 324h1v1h-1zM494 338h1v1h-1zM495 322h1v1h-1zM495 323h1v1h-1zM496 339h1v1h-1zM496 356h1v1h-1zM497 345h1v1h-1zM498 353h1v1h-1zM499 319h1v1h-1zM499 355h1v1h-1zM499 357h1v1h-1zM500 353h1v1h-1zM502 333h1v1h-1zM502 354h1v1h-1zM503 340h1v1h-1zM504 324h1v1h-1zM505 355h1v1h-1zM506 355h1v1h-1zM507 315h1v1h-1zM508 343h1v1h-1zM509 312h1v1h-1zM510 337h1v1h-1zM512 355h1v1h-1zM513 318h1v1h-1zM513 345h1v1h-1zM513 356h1v1h-1zM514 357h1v1h-1zM515 355h1v1h-1zM517 339h1v1h-1zM520 345h1v1h-1zM522 354h1v1h-1zM523 324h1v1h-1zM523 341h1v1h-1zM524 353h1v1h-1zM524 355h1v1h-1zM526 321h1v1h-1zM527 328h1v1h-1zM527 353h1v1h-1zM527 357h1v1h-1zM529 314h1v1h-1zM529 315h1v1h-1zM529 323h1v1h-1zM529 354h1v1h-1zM529 356h1v1h-1zM531 339h1v1h-1zM531 344h1v1h-1zM531 345h1v1h-1zM531 355h1v1h-1zM532 356h1v1h-1zM533 330h1v1h-1zM534 356h1v1h-1zM536 335h1v1h-1zM536 338h1v1h-1zM536 354h1v1h-1zM538 354h1v1h-1zM539 339h1v1h-1zM539 354h1v1h-1zM540 345h1v1h-1zM540 355h1v1h-1zM541 319h1v1h-1zM542 351h1v1h-1z" fill="#00e5ee"/><path d="M54 349h1v1h-1zM55 346h1v1h-1zM55 347h1v1h-1zM55 348h1v1h-1zM55 350h1v1h-1zM55 360h1v1h-1zM56 348h1v1h-1zM56 359h1v1h-1zM56 360h1v1h-1zM57 347h1v1h-1zM57 357h1v1h-1zM58 347h1v1h-1zM58 357h1v1h-1zM58 358h1v1h-1zM58 359h1v1h-1zM59 347h1v1h-1zM59 359h1v1h-1zM59 360h1v1h-1zM61 347h1v1h-1zM61 348h1v1h-1zM62 347h1v1h-1zM63 348h1v1h-1zM63 360h1v1h-1zM64 349h1v1h-1zM64 358h1v1h-1zM64 360h1v1h-1zM65 349h1v1h-1zM66 358h1v1h-1zM66 359h1v1h-1zM67 347h1v1h-1zM67 348h1v1h-1zM67 350h1v1h-1zM68 348h1v1h-1zM68 359h1v1h-1zM68 360h1v1h-1zM69 347h1v1h-1zM69 349h1v1h-1zM70 347h1v1h-1zM70 348h1v1h-1zM70 349h1v1h-1zM70 359h1v1h-1zM71 349h1v1h-1zM71 357h1v1h-1zM71 359h1v1h-1zM71 360h1v1h-1zM74 347h1v1h-1zM74 359h1v1h-1zM75 347h1v1h-1zM75 348h1v1h-1zM75 360h1v1h-1zM76 348h1v1h-1zM76 357h1v1h-1zM76 360h1v1h-1zM77 346h1v1h-1zM78 347h1v1h-1zM78 349h1v1h-1zM78 359h1v1h-1zM78 360h1v1h-1zM79 348h1v1h-1zM79 349h1v1h-1zM79 360h1v1h-1zM80 349h1v1h-1zM80 357h1v1h-1zM80 358h1v1h-1zM80 359h1v1h-1zM81 350h1v1h-1zM81 359h1v1h-1zM81 360h1v1h-1zM82 348h1v1h-1zM82 358h1v1h-1zM83 349h1v1h-1zM84 359h1v1h-1zM85 348h1v1h-1zM85 359h1v1h-1zM87 348h1v1h-1zM88 348h1v1h-1zM88 349h1v1h-1zM88 359h1v1h-1zM88 360h1v1h-1zM89 348h1v1h-1zM89 349h1v1h-1zM90 346h1v1h-1zM90 348h1v1h-1zM90 360h1v1h-1zM91 349h1v1h-1zM91 357h1v1h-1zM92 346h1v1h-1zM92 350h1v1h-1zM93 348h1v1h-1zM94 349h1v1h-1zM94 360h1v1h-1zM94 322h1v1h-1zM95 347h1v1h-1zM96 348h1v1h-1zM96 349h1v1h-1zM96 360h1v1h-1zM97 347h1v1h-1zM97 348h1v1h-1zM97 349h1v1h-1zM97 359h1v1h-1zM98 348h1v1h-1zM98 349h1v1h-1zM98 359h1v1h-1zM99 347h1v1h-1zM99 348h1v1h-1zM99 359h1v1h-1zM99 360h1v1h-1zM100 347h1v1h-1zM100 349h1v1h-1zM100 360h1v1h-1zM101 357h1v1h-1zM101 358h1v1h-1zM102 349h1v1h-1zM102 359h1v1h-1zM103 348h1v1h-1zM103 350h1v1h-1zM103 358h1v1h-1zM104 347h1v1h-1zM104 360h1v1h-1zM105 347h1v1h-1zM105 349h1v1h-1zM105 360h1v1h-1zM106 348h1v1h-1zM106 357h1v1h-1zM106 360h1v1h-1zM107 347h1v1h-1zM107 359h1v1h-1zM108 348h1v1h-1zM109 347h1v1h-1zM109 360h1v1h-1zM110 348h1v1h-1zM110 358h1v1h-1zM110 359h1v1h-1zM110 360h1v1h-1zM111 347h1v1h-1zM111 359h1v1h-1zM111 360h1v1h-1zM112 347h1v1h-1zM112 349h1v1h-1zM112 359h1v1h-1zM112 360h1v1h-1zM113 348h1v1h-1zM113 360h1v1h-1zM114 360h1v1h-1zM115 357h1v1h-1zM115 358h1v1h-1zM115 360h1v1h-1zM116 360h1v1h-1zM116 340h1v1h-1zM117 348h1v1h-1zM117 358h1v1h-1zM118 347h1v1h-1zM118 348h1v1h-1zM118 350h1v1h-1zM118 360h1v1h-1zM119 350h1v1h-1zM120 347h1v1h-1zM120 349h1v1h-1zM120 359h1v1h-1zM120 360h1v1h-1zM121 347h1v1h-1zM121 349h1v1h-1zM121 358h1v1h-1zM122 348h1v1h-1zM122 349h1v1h-1zM123 348h1v1h-1zM123 360h1v1h-1zM124 348h1v1h-1zM124 349h1v1h-1zM125 348h1v1h-1zM127 347h1v1h-1zM127 349h1v1h-1zM127 359h1v1h-1zM127 360h1v1h-1zM128 348h1v1h-1zM128 359h1v1h-1zM128 360h1v1h-1zM129 347h1v1h-1zM129 348h1v1h-1zM129 360h1v1h-1zM130 349h1v1h-1zM130 359h1v1h-1zM131 348h1v1h-1zM131 358h1v1h-1zM131 359h1v1h-1zM132 347h1v1h-1zM132 359h1v1h-1zM134 346h1v1h-1zM134 347h1v1h-1zM135 349h1v1h-1zM135 358h1v1h-1zM135 359h1v1h-1zM135 360h1v1h-1zM136 348h1v1h-1zM136 350h1v1h-1zM136 359h1v1h-1zM136 360h1v1h-1zM137 347h1v1h-1zM137 349h1v1h-1zM137 360h1v1h-1zM138 350h1v1h-1zM138 359h1v1h-1zM138 360h1v1h-1zM139 349h1v1h-1zM140 346h1v1h-1zM140 359h1v1h-1zM140 360h1v1h-1zM141 347h1v1h-1zM141 349h1v1h-1zM141 359h1v1h-1zM142 348h1v1h-1zM142 358h1v1h-1zM142 360h1v1h-1zM143 348h1v1h-1zM143 358h1v1h-1zM143 359h1v1h-1zM144 348h1v1h-1zM144 349h1v1h-1zM144 359h1v1h-1zM145 348h1v1h-1zM146 349h1v1h-1zM146 360h1v1h-1zM147 347h1v1h-1zM147 349h1v1h-1zM147 359h1v1h-1zM147 360h1v1h-1zM148 348h1v1h-1zM148 359h1v1h-1zM150 359h1v1h-1zM151 348h1v1h-1zM152 347h1v1h-1zM153 348h1v1h-1zM154 347h1v1h-1zM154 348h1v1h-1zM154 349h1v1h-1zM154 357h1v1h-1zM155 348h1v1h-1zM155 349h1v1h-1zM158 346h1v1h-1zM158 347h1v1h-1zM158 349h1v1h-1zM158 360h1v1h-1zM159 348h1v1h-1zM159 349h1v1h-1zM159 359h1v1h-1zM160 347h1v1h-1zM160 359h1v1h-1zM161 346h1v1h-1zM163 359h1v1h-1zM163 360h1v1h-1zM164 346h1v1h-1zM166 347h1v1h-1zM166 350h1v1h-1zM166 360h1v1h-1zM167 346h1v1h-1zM167 348h1v1h-1zM168 348h1v1h-1zM168 349h1v1h-1zM168 360h1v1h-1zM169 347h1v1h-1zM169 348h1v1h-1zM169 359h1v1h-1zM170 347h1v1h-1zM170 348h1v1h-1zM170 358h1v1h-1zM170 360h1v1h-1zM171 347h1v1h-1zM171 349h1v1h-1zM171 360h1v1h-1zM172 349h1v1h-1zM172 350h1v1h-1zM172 360h1v1h-1zM173 348h1v1h-1zM173 359h1v1h-1zM173 360h1v1h-1zM174 360h1v1h-1zM175 350h1v1h-1zM175 358h1v1h-1zM175 360h1v1h-1zM176 347h1v1h-1zM177 347h1v1h-1zM177 350h1v1h-1zM177 360h1v1h-1zM178 349h1v1h-1zM179 357h1v1h-1zM179 360h1v1h-1zM180 359h1v1h-1zM181 359h1v1h-1zM182 360h1v1h-1zM183 347h1v1h-1zM183 349h1v1h-1zM185 359h1v1h-1zM186 347h1v1h-1zM186 348h1v1h-1zM186 349h1v1h-1zM186 358h1v1h-1zM186 360h1v1h-1zM187 346h1v1h-1zM187 358h1v1h-1zM187 359h1v1h-1zM188 348h1v1h-1zM188 359h1v1h-1zM189 359h1v1h-1zM190 360h1v1h-1zM191 347h1v1h-1zM191 349h1v1h-1zM191 360h1v1h-1zM192 348h1v1h-1zM192 360h1v1h-1zM193 347h1v1h-1zM193 348h1v1h-1zM193 359h1v1h-1zM193 360h1v1h-1zM194 350h1v1h-1zM194 358h1v1h-1zM195 347h1v1h-1zM195 348h1v1h-1zM196 347h1v1h-1zM197 348h1v1h-1zM197 349h1v1h-1zM198 348h1v1h-1zM198 349h1v1h-1zM198 360h1v1h-1zM199 347h1v1h-1zM200 347h1v1h-1zM200 348h1v1h-1zM200 360h1v1h-1zM201 347h1v1h-1zM201 359h1v1h-1zM202 347h1v1h-1zM202 348h1v1h-1zM202 349h1v1h-1zM202 359h1v1h-1zM203 347h1v1h-1zM203 359h1v1h-1zM203 360h1v1h-1zM204 345h1v1h-1zM204 349h1v1h-1zM204 360h1v1h-1zM205 346h1v1h-1zM205 348h1v1h-1zM205 349h1v1h-1zM205 359h1v1h-1zM205 360h1v1h-1zM205 336h1v1h-1zM206 348h1v1h-1zM206 360h1v1h-1zM207 357h1v1h-1zM207 359h1v1h-1zM207 360h1v1h-1zM208 360h1v1h-1zM209 346h1v1h-1zM209 347h1v1h-1zM209 359h1v1h-1zM210 347h1v1h-1zM210 360h1v1h-1zM211 349h1v1h-1zM212 350h1v1h-1zM212 357h1v1h-1zM213 357h1v1h-1zM213 360h1v1h-1zM214 359h1v1h-1zM214 360h1v1h-1zM215 359h1v1h-1zM216 349h1v1h-1zM217 346h1v1h-1zM217 348h1v1h-1zM217 357h1v1h-1zM218 359h1v1h-1zM218 360h1v1h-1zM219 349h1v1h-1zM219 359h1v1h-1zM220 345h1v1h-1zM220 350h1v1h-1zM220 360h1v1h-1zM221 359h1v1h-1zM222 359h1v1h-1zM223 357h1v1h-1zM223 359h1v1h-1zM223 345h1v1h-1zM224 350h1v1h-1zM224 360h1v1h-1zM225 347h1v1h-1zM225 348h1v1h-1zM225 349h1v1h-1zM225 359h1v1h-1zM226 346h1v1h-1zM226 348h1v1h-1zM226 349h1v1h-1zM226 357h1v1h-1zM226 360h1v1h-1zM228 350h1v1h-1zM228 360h1v1h-1zM229 349h1v1h-1zM229 359h1v1h-1zM229 360h1v1h-1zM230 346h1v1h-1zM230 350h1v1h-1zM230 359h1v1h-1zM230 360h1v1h-1zM231 347h1v1h-1zM231 349h1v1h-1zM231 359h1v1h-1zM233 349h1v1h-1zM233 358h1v1h-1zM234 349h1v1h-1zM234 359h1v1h-1zM234 360h1v1h-1zM235 347h1v1h-1zM235 349h1v1h-1zM236 359h1v1h-1zM237 348h1v1h-1zM237 349h1v1h-1zM237 359h1v1h-1zM238 346h1v1h-1zM238 350h1v1h-1zM238 359h1v1h-1zM239 359h1v1h-1zM240 347h1v1h-1zM240 349h1v1h-1zM241 349h1v1h-1zM241 360h1v1h-1zM242 346h1v1h-1zM242 347h1v1h-1zM242 359h1v1h-1zM242 360h1v1h-1zM243 346h1v1h-1zM243 347h1v1h-1zM243 349h1v1h-1zM243 358h1v1h-1zM245 347h1v1h-1zM245 350h1v1h-1zM245 360h1v1h-1zM246 346h1v1h-1zM246 348h1v1h-1zM246 350h1v1h-1zM247 360h1v1h-1zM248 347h1v1h-1zM248 350h1v1h-1zM248 359h1v1h-1zM248 360h1v1h-1zM250 348h1v1h-1zM250 360h1v1h-1zM251 349h1v1h-1zM252 347h1v1h-1zM253 347h1v1h-1zM254 348h1v1h-1zM254 350h1v1h-1zM256 348h1v1h-1zM256 358h1v1h-1zM258 347h1v1h-1zM258 349h1v1h-1zM259 345h1v1h-1zM259 360h1v1h-1zM260 348h1v1h-1zM261 347h1v1h-1zM261 359h1v1h-1zM262 360h1v1h-1zM263 347h1v1h-1zM263 359h1v1h-1zM263 360h1v1h-1zM264 345h1v1h-1zM264 346h1v1h-1zM265 346h1v1h-1zM265 358h1v1h-1zM266 359h1v1h-1zM268 348h1v1h-1zM268 360h1v1h-1zM269 347h1v1h-1zM269 349h1v1h-1zM270 347h1v1h-1zM270 360h1v1h-1zM271 348h1v1h-1zM273 359h1v1h-1zM274 358h1v1h-1zM275 360h1v1h-1zM277 358h1v1h-1zM278 359h1v1h-1zM279 350h1v1h-1zM280 359h1v1h-1zM281 359h1v1h-1zM283 347h1v1h-1zM283 359h1v1h-1zM284 357h1v1h-1zM284 359h1v1h-1zM284 360h1v1h-1zM286 358h1v1h-1zM287 348h1v1h-1zM287 359h1v1h-1zM288 349h1v1h-1zM288 358h1v1h-1zM289 348h1v1h-1zM290 348h1v1h-1zM291 349h1v1h-1zM294 359h1v1h-1zM296 360h1v1h-1zM298 347h1v1h-1zM299 347h1v1h-1zM301 359h1v1h-1zM301 360h1v1h-1zM302 348h1v1h-1zM302 360h1v1h-1zM303 349h1v1h-1zM303 360h1v1h-1zM304 345h1v1h-1zM305 359h1v1h-1zM305 360h1v1h-1zM307 345h1v1h-1zM308 345h1v1h-1zM308 346h1v1h-1zM308 349h1v1h-1zM310 345h1v1h-1zM310 346h1v1h-1zM312 360h1v1h-1zM313 347h1v1h-1zM313 349h1v1h-1zM313 360h1v1h-1zM314 359h1v1h-1zM315 345h1v1h-1zM315 358h1v1h-1zM315 359h1v1h-1zM315 360h1v1h-1zM316 348h1v1h-1zM317 347h1v1h-1zM318 347h1v1h-1zM318 359h1v1h-1zM318 360h1v1h-1zM319 360h1v1h-1zM320 347h1v1h-1zM320 358h1v1h-1zM320 359h1v1h-1zM321 360h1v1h-1zM323 349h1v1h-1zM323 360h1v1h-1zM325 347h1v1h-1zM327 347h1v1h-1zM327 348h1v1h-1zM327 349h1v1h-1zM328 347h1v1h-1zM329 359h1v1h-1zM330 349h1v1h-1zM331 357h1v1h-1zM331 359h1v1h-1zM331 360h1v1h-1zM332 349h1v1h-1zM333 359h1v1h-1zM334 350h1v1h-1zM334 359h1v1h-1zM335 347h1v1h-1zM335 360h1v1h-1zM339 348h1v1h-1zM339 350h1v1h-1zM339 360h1v1h-1zM340 345h1v1h-1zM340 347h1v1h-1zM340 348h1v1h-1zM340 349h1v1h-1zM340 360h1v1h-1zM341 346h1v1h-1zM341 348h1v1h-1zM342 345h1v1h-1zM342 359h1v1h-1zM343 348h1v1h-1zM343 359h1v1h-1zM345 348h1v1h-1zM346 349h1v1h-1zM347 359h1v1h-1zM347 360h1v1h-1zM348 348h1v1h-1zM349 349h1v1h-1zM349 357h1v1h-1zM350 350h1v1h-1zM351 349h1v1h-1zM351 350h1v1h-1zM352 349h1v1h-1zM353 347h1v1h-1zM353 348h1v1h-1zM353 359h1v1h-1zM354 360h1v1h-1zM355 347h1v1h-1zM355 359h1v1h-1zM357 348h1v1h-1zM357 357h1v1h-1zM357 359h1v1h-1zM358 359h1v1h-1zM359 346h1v1h-1zM359 348h1v1h-1zM360 349h1v1h-1zM362 349h1v1h-1zM362 359h1v1h-1zM363 360h1v1h-1zM364 360h1v1h-1zM365 359h1v1h-1zM365 360h1v1h-1zM367 350h1v1h-1zM369 346h1v1h-1zM369 348h1v1h-1zM369 349h1v1h-1zM369 350h1v1h-1zM369 359h1v1h-1zM369 360h1v1h-1zM370 360h1v1h-1zM371 348h1v1h-1zM371 349h1v1h-1zM372 347h1v1h-1zM373 358h1v1h-1zM375 348h1v1h-1zM378 347h1v1h-1zM378 348h1v1h-1zM378 359h1v1h-1zM379 345h1v1h-1zM379 347h1v1h-1zM379 359h1v1h-1zM379 360h1v1h-1zM380 348h1v1h-1zM380 360h1v1h-1zM381 359h1v1h-1zM382 347h1v1h-1zM382 358h1v1h-1zM385 350h1v1h-1zM386 346h1v1h-1zM386 359h1v1h-1zM387 350h1v1h-1zM387 360h1v1h-1zM388 347h1v1h-1zM388 348h1v1h-1zM388 276h1v1h-1zM389 359h1v1h-1zM389 360h1v1h-1zM391 359h1v1h-1zM392 348h1v1h-1zM393 357h1v1h-1zM393 360h1v1h-1zM394 349h1v1h-1zM395 348h1v1h-1zM395 357h1v1h-1zM395 359h1v1h-1zM395 360h1v1h-1zM396 348h1v1h-1zM396 359h1v1h-1zM397 347h1v1h-1zM397 349h1v1h-1zM397 360h1v1h-1zM398 359h1v1h-1zM398 360h1v1h-1zM398 321h1v1h-1zM399 346h1v1h-1zM399 348h1v1h-1zM399 349h1v1h-1zM400 349h1v1h-1zM400 360h1v1h-1zM401 359h1v1h-1zM404 349h1v1h-1zM405 348h1v1h-1zM406 348h1v1h-1zM407 359h1v1h-1zM408 349h1v1h-1zM409 347h1v1h-1zM410 348h1v1h-1zM413 349h1v1h-1zM414 347h1v1h-1zM414 360h1v1h-1zM415 348h1v1h-1zM415 349h1v1h-1zM416 359h1v1h-1zM417 347h1v1h-1zM417 359h1v1h-1zM418 359h1v1h-1zM419 357h1v1h-1zM419 360h1v1h-1zM420 360h1v1h-1zM421 348h1v1h-1zM421 349h1v1h-1zM421 350h1v1h-1zM422 349h1v1h-1zM423 346h1v1h-1zM423 347h1v1h-1zM423 348h1v1h-1zM423 359h1v1h-1zM423 360h1v1h-1zM424 347h1v1h-1zM425 360h1v1h-1zM426 349h1v1h-1zM426 350h1v1h-1zM428 348h1v1h-1zM429 348h1v1h-1zM429 360h1v1h-1zM430 349h1v1h-1zM431 348h1v1h-1zM432 348h1v1h-1zM432 360h1v1h-1zM436 350h1v1h-1zM436 359h1v1h-1zM438 359h1v1h-1zM441 348h1v1h-1zM442 347h1v1h-1zM442 348h1v1h-1zM444 348h1v1h-1zM444 360h1v1h-1zM445 357h1v1h-1zM446 347h1v1h-1zM446 357h1v1h-1zM447 347h1v1h-1zM447 349h1v1h-1zM448 349h1v1h-1zM449 359h1v1h-1zM450 349h1v1h-1zM452 359h1v1h-1zM453 359h1v1h-1zM457 348h1v1h-1zM458 345h1v1h-1zM459 346h1v1h-1zM459 347h1v1h-1zM461 349h1v1h-1zM462 357h1v1h-1zM462 360h1v1h-1zM464 350h1v1h-1zM469 349h1v1h-1zM470 358h1v1h-1zM470 359h1v1h-1zM470 360h1v1h-1zM475 348h1v1h-1zM477 357h1v1h-1zM479 360h1v1h-1zM480 348h1v1h-1zM480 358h1v1h-1zM480 359h1v1h-1zM480 360h1v1h-1zM481 348h1v1h-1zM481 349h1v1h-1zM482 360h1v1h-1zM483 349h1v1h-1zM483 359h1v1h-1zM485 346h1v1h-1zM485 347h1v1h-1zM487 347h1v1h-1zM488 347h1v1h-1zM488 358h1v1h-1zM489 359h1v1h-1zM490 348h1v1h-1zM491 347h1v1h-1zM492 357h1v1h-1zM494 350h1v1h-1zM495 347h1v1h-1zM499 360h1v1h-1zM500 348h1v1h-1zM500 357h1v1h-1zM501 348h1v1h-1zM502 348h1v1h-1zM502 349h1v1h-1zM503 349h1v1h-1zM503 357h1v1h-1zM503 359h1v1h-1zM504 357h1v1h-1zM504 360h1v1h-1zM506 350h1v1h-1zM507 346h1v1h-1zM508 350h1v1h-1zM510 349h1v1h-1zM512 348h1v1h-1zM513 359h1v1h-1zM514 349h1v1h-1zM514 360h1v1h-1zM516 347h1v1h-1zM518 347h1v1h-1zM520 348h1v1h-1zM520 357h1v1h-1zM520 360h1v1h-1zM521 349h1v1h-1zM521 360h1v1h-1zM522 347h1v1h-1zM523 347h1v1h-1zM526 357h1v1h-1zM526 358h1v1h-1zM526 359h1v1h-1zM527 349h1v1h-1zM529 348h1v1h-1zM530 347h1v1h-1zM531 349h1v1h-1zM533 360h1v1h-1zM534 350h1v1h-1zM535 359h1v1h-1zM536 359h1v1h-1zM538 348h1v1h-1zM539 348h1v1h-1zM540 349h1v1h-1zM541 347h1v1h-1zM541 349h1v1h-1zM541 359h1v1h-1zM542 348h1v1h-1z" fill="#00ee00"/><path d="M54 352h1v1h-1zM54 359h1v1h-1zM54 360h1v1h-1zM55 352h1v1h-1zM58 352h1v1h-1zM59 352h1v1h-1zM60 357h1v1h-1zM60 359h1v1h-1zM60 360h1v1h-1zM61 360h1v1h-1zM63 352h1v1h-1zM63 356h1v1h-1zM64 352h1v1h-1zM66 352h1v1h-1zM67 352h1v1h-1zM69 352h1v1h-1zM71 358h1v1h-1zM72 352h1v1h-1zM72 360h1v1h-1zM74 352h1v1h-1zM75 352h1v1h-1zM76 359h1v1h-1zM77 352h1v1h-1zM77 358h1v1h-1zM77 359h1v1h-1zM78 352h1v1h-1zM79 352h1v1h-1zM83 352h1v1h-1zM83 360h1v1h-1zM84 352h1v1h-1zM84 360h1v1h-1zM85 352h1v1h-1zM86 360h1v1h-1zM89 352h1v1h-1zM89 358h1v1h-1zM90 352h1v1h-1zM91 359h1v1h-1zM92 352h1v1h-1zM94 352h1v1h-1zM95 357h1v1h-1zM95 359h1v1h-1zM95 360h1v1h-1zM96 352h1v1h-1zM96 359h1v1h-1zM99 352h1v1h-1zM101 360h1v1h-1zM102 352h1v1h-1zM103 352h1v1h-1zM103 355h1v1h-1zM103 357h1v1h-1zM103 359h1v1h-1zM104 352h1v1h-1zM105 358h1v1h-1zM105 359h1v1h-1zM106 359h1v1h-1zM107 356h1v1h-1zM107 360h1v1h-1zM108 352h1v1h-1zM108 355h1v1h-1zM108 357h1v1h-1zM108 359h1v1h-1zM109 352h1v1h-1zM109 359h1v1h-1zM111 352h1v1h-1zM115 352h1v1h-1zM116 352h1v1h-1zM116 355h1v1h-1zM116 359h1v1h-1zM117 352h1v1h-1zM117 356h1v1h-1zM117 360h1v1h-1zM119 357h1v1h-1zM119 359h1v1h-1zM119 360h1v1h-1zM120 358h1v1h-1zM121 352h1v1h-1zM121 357h1v1h-1zM123 359h1v1h-1zM124 360h1v1h-1zM125 352h1v1h-1zM125 359h1v1h-1zM126 352h1v1h-1zM126 357h1v1h-1zM126 359h1v1h-1zM127 352h1v1h-1zM128 352h1v1h-1zM129 359h1v1h-1zM130 352h1v1h-1zM131 352h1v1h-1zM132 352h1v1h-1zM132 360h1v1h-1zM133 352h1v1h-1zM133 358h1v1h-1zM133 360h1v1h-1zM134 359h1v1h-1zM134 360h1v1h-1zM135 352h1v1h-1zM136 352h1v1h-1zM139 352h1v1h-1zM139 355h1v1h-1zM139 356h1v1h-1zM141 360h1v1h-1zM142 352h1v1h-1zM142 357h1v1h-1zM142 359h1v1h-1zM145 352h1v1h-1zM146 352h1v1h-1zM147 352h1v1h-1zM147 357h1v1h-1zM148 352h1v1h-1zM148 360h1v1h-1zM150 352h1v1h-1zM151 352h1v1h-1zM151 356h1v1h-1zM151 359h1v1h-1zM151 360h1v1h-1zM152 352h1v1h-1zM152 358h1v1h-1zM152 360h1v1h-1zM153 352h1v1h-1zM153 355h1v1h-1zM153 359h1v1h-1zM154 352h1v1h-1zM155 360h1v1h-1zM156 352h1v1h-1zM156 358h1v1h-1zM156 359h1v1h-1zM156 360h1v1h-1zM158 359h1v1h-1zM159 352h1v1h-1zM159 360h1v1h-1zM160 352h1v1h-1zM160 358h1v1h-1zM161 352h1v1h-1zM164 352h1v1h-1zM164 357h1v1h-1zM164 359h1v1h-1zM165 352h1v1h-1zM166 352h1v1h-1zM166 358h1v1h-1zM167 352h1v1h-1zM167 356h1v1h-1zM167 359h1v1h-1zM168 352h1v1h-1zM168 359h1v1h-1zM170 352h1v1h-1zM171 352h1v1h-1zM172 359h1v1h-1zM173 352h1v1h-1zM173 357h1v1h-1zM174 352h1v1h-1zM175 352h1v1h-1zM176 355h1v1h-1zM176 359h1v1h-1zM176 360h1v1h-1zM177 357h1v1h-1zM177 359h1v1h-1zM178 352h1v1h-1zM179 352h1v1h-1zM179 359h1v1h-1zM180 352h1v1h-1zM180 360h1v1h-1zM181 352h1v1h-1zM181 360h1v1h-1zM183 352h1v1h-1zM183 359h1v1h-1zM185 352h1v1h-1zM185 357h1v1h-1zM185 360h1v1h-1zM188 357h1v1h-1zM189 352h1v1h-1zM190 352h1v1h-1zM190 359h1v1h-1zM192 352h1v1h-1zM192 358h1v1h-1zM192 359h1v1h-1zM193 352h1v1h-1zM194 352h1v1h-1zM195 352h1v1h-1zM195 355h1v1h-1zM196 360h1v1h-1zM197 352h1v1h-1zM197 359h1v1h-1zM198 357h1v1h-1zM199 352h1v1h-1zM200 359h1v1h-1zM201 356h1v1h-1zM201 360h1v1h-1zM202 355h1v1h-1zM202 360h1v1h-1zM203 357h1v1h-1zM203 358h1v1h-1zM204 352h1v1h-1zM207 352h1v1h-1zM210 352h1v1h-1zM212 352h1v1h-1zM212 359h1v1h-1zM213 356h1v1h-1zM214 352h1v1h-1zM214 357h1v1h-1zM215 352h1v1h-1zM215 360h1v1h-1zM216 352h1v1h-1zM216 359h1v1h-1zM217 352h1v1h-1zM217 356h1v1h-1zM217 359h1v1h-1zM217 360h1v1h-1zM218 352h1v1h-1zM219 352h1v1h-1zM219 360h1v1h-1zM220 359h1v1h-1zM221 352h1v1h-1zM221 355h1v1h-1zM223 352h1v1h-1zM224 352h1v1h-1zM224 359h1v1h-1zM225 352h1v1h-1zM227 352h1v1h-1zM228 352h1v1h-1zM229 352h1v1h-1zM230 352h1v1h-1zM231 352h1v1h-1zM231 360h1v1h-1zM232 352h1v1h-1zM233 352h1v1h-1zM233 359h1v1h-1zM234 352h1v1h-1zM235 352h1v1h-1zM236 352h1v1h-1zM236 358h1v1h-1zM237 360h1v1h-1zM238 352h1v1h-1zM238 357h1v1h-1zM239 352h1v1h-1zM239 360h1v1h-1zM240 352h1v1h-1zM240 360h1v1h-1zM241 352h1v1h-1zM241 355h1v1h-1zM242 352h1v1h-1zM242 358h1v1h-1zM243 352h1v1h-1zM243 357h1v1h-1zM244 358h1v1h-1zM246 352h1v1h-1zM246 359h1v1h-1zM246 360h1v1h-1zM248 352h1v1h-1zM251 359h1v1h-1zM251 360h1v1h-1zM254 352h1v1h-1zM255 358h1v1h-1zM256 357h1v1h-1zM257 352h1v1h-1zM257 360h1v1h-1zM260 355h1v1h-1zM261 352h1v1h-1zM262 352h1v1h-1zM262 357h1v1h-1zM262 359h1v1h-1zM265 356h1v1h-1zM266 360h1v1h-1zM270 352h1v1h-1zM271 352h1v1h-1zM272 352h1v1h-1zM274 352h1v1h-1zM275 352h1v1h-1zM276 359h1v1h-1zM277 352h1v1h-1zM277 359h1v1h-1zM278 352h1v1h-1zM280 360h1v1h-1zM281 352h1v1h-1zM282 352h1v1h-1zM283 352h1v1h-1zM285 352h1v1h-1zM285 359h1v1h-1zM286 359h1v1h-1zM287 352h1v1h-1zM288 352h1v1h-1zM288 359h1v1h-1zM288 360h1v1h-1zM289 352h1v1h-1zM290 352h1v1h-1zM291 352h1v1h-1zM293 358h1v1h-1zM293 359h1v1h-1zM294 352h1v1h-1zM296 352h1v1h-1zM298 358h1v1h-1zM299 352h1v1h-1zM301 352h1v1h-1zM302 352h1v1h-1zM303 352h1v1h-1zM304 352h1v1h-1zM304 358h1v1h-1zM305 352h1v1h-1zM307 358h1v1h-1zM307 359h1v1h-1zM311 360h1v1h-1zM313 352h1v1h-1zM314 358h1v1h-1zM319 352h1v1h-1zM321 352h1v1h-1zM322 359h1v1h-1zM324 358h1v1h-1zM327 352h1v1h-1zM329 360h1v1h-1zM330 352h1v1h-1zM330 359h1v1h-1zM331 352h1v1h-1zM334 358h1v1h-1zM335 359h1v1h-1zM336 352h1v1h-1zM340 352h1v1h-1zM341 360h1v1h-1zM342 352h1v1h-1zM344 357h1v1h-1zM344 359h1v1h-1zM346 360h1v1h-1zM348 352h1v1h-1zM350 356h1v1h-1zM354 358h1v1h-1zM355 352h1v1h-1zM358 360h1v1h-1zM360 359h1v1h-1zM360 360h1v1h-1zM362 352h1v1h-1zM365 358h1v1h-1zM367 352h1v1h-1zM367 358h1v1h-1zM372 352h1v1h-1zM373 360h1v1h-1zM377 359h1v1h-1zM378 352h1v1h-1zM379 352h1v1h-1zM381 352h1v1h-1zM384 355h1v1h-1zM384 358h1v1h-1zM386 352h1v1h-1zM388 352h1v1h-1zM389 358h1v1h-1zM392 357h1v1h-1zM392 359h1v1h-1zM394 352h1v1h-1zM394 358h1v1h-1zM396 352h1v1h-1zM396 360h1v1h-1zM397 352h1v1h-1zM399 360h1v1h-1zM401 360h1v1h-1zM404 355h1v1h-1zM405 359h1v1h-1zM406 356h1v1h-1zM408 352h1v1h-1zM409 352h1v1h-1zM410 352h1v1h-1zM411 357h1v1h-1zM412 352h1v1h-1zM413 352h1v1h-1zM414 358h1v1h-1zM414 359h1v1h-1zM420 352h1v1h-1zM420 357h1v1h-1zM423 352h1v1h-1zM427 352h1v1h-1zM427 358h1v1h-1zM428 359h1v1h-1zM431 352h1v1h-1zM431 360h1v1h-1zM432 352h1v1h-1zM433 352h1v1h-1zM433 358h1v1h-1zM435 352h1v1h-1zM435 358h1v1h-1zM438 352h1v1h-1zM439 352h1v1h-1zM441 352h1v1h-1zM441 357h1v1h-1zM443 359h1v1h-1zM445 360h1v1h-1zM447 352h1v1h-1zM447 357h1v1h-1zM447 360h1v1h-1zM448 352h1v1h-1zM450 352h1v1h-1zM453 352h1v1h-1zM455 359h1v1h-1zM456 359h1v1h-1zM459 352h1v1h-1zM460 360h1v1h-1zM465 358h1v1h-1zM468 356h1v1h-1zM469 359h1v1h-1zM470 357h1v1h-1zM472 359h1v1h-1zM479 352h1v1h-1zM480 357h1v1h-1zM482 352h1v1h-1zM482 358h1v1h-1zM486 355h1v1h-1zM487 359h1v1h-1zM488 359h1v1h-1zM491 360h1v1h-1zM492 359h1v1h-1zM494 359h1v1h-1zM499 352h1v1h-1zM501 352h1v1h-1zM503 352h1v1h-1zM507 352h1v1h-1zM513 352h1v1h-1zM514 352h1v1h-1zM516 352h1v1h-1zM516 358h1v1h-1zM520 352h1v1h-1zM523 359h1v1h-1zM527 359h1v1h-1zM530 352h1v1h-1zM530 358h1v1h-1zM533 352h1v1h-1zM533 359h1v1h-1zM540 352h1v1h-1zM541 352h1v1h-1zM542 359h1v1h-1z" fill="#ff1a1a"/><path d="M54 354h1v1h-1zM56 355h1v1h-1zM58 360h1v1h-1zM60 358h1v1h-1zM61 354h1v1h-1zM63 357h1v1h-1zM63 359h1v1h-1zM64 357h1v1h-1zM65 358h1v1h-1zM65 360h1v1h-1zM67 359h1v1h-1zM69 353h1v1h-1zM69 359h1v1h-1zM72 358h1v1h-1zM73 359h1v1h-1zM74 360h1v1h-1zM75 356h1v1h-1zM76 353h1v1h-1zM81 353h1v1h-1zM84 357h1v1h-1zM86 359h1v1h-1zM87 359h1v1h-1zM89 359h1v1h-1zM89 360h1v1h-1zM91 360h1v1h-1zM92 359h1v1h-1zM93 359h1v1h-1zM93 360h1v1h-1zM97 356h1v1h-1zM99 357h1v1h-1zM99 358h1v1h-1zM104 359h1v1h-1zM106 358h1v1h-1zM109 357h1v1h-1zM111 353h1v1h-1zM113 356h1v1h-1zM114 356h1v1h-1zM114 359h1v1h-1zM117 353h1v1h-1zM117 357h1v1h-1zM117 359h1v1h-1zM118 357h1v1h-1zM120 357h1v1h-1zM121 356h1v1h-1zM122 360h1v1h-1zM123 354h1v1h-1zM124 357h1v1h-1zM124 359h1v1h-1zM126 360h1v1h-1zM127 353h1v1h-1zM129 357h1v1h-1zM130 360h1v1h-1zM131 360h1v1h-1zM133 356h1v1h-1zM133 357h1v1h-1zM135 356h1v1h-1zM135 357h1v1h-1zM136 355h1v1h-1zM139 359h1v1h-1zM139 360h1v1h-1zM143 357h1v1h-1zM143 360h1v1h-1zM145 359h1v1h-1zM146 359h1v1h-1zM148 357h1v1h-1zM149 357h1v1h-1zM149 358h1v1h-1zM149 359h1v1h-1zM151 358h1v1h-1zM152 356h1v1h-1zM152 357h1v1h-1zM154 358h1v1h-1zM156 355h1v1h-1zM158 358h1v1h-1zM159 353h1v1h-1zM159 354h1v1h-1zM159 358h1v1h-1zM160 357h1v1h-1zM161 353h1v1h-1zM162 353h1v1h-1zM162 358h1v1h-1zM162 360h1v1h-1zM164 358h1v1h-1zM164 360h1v1h-1zM165 358h1v1h-1zM165 359h1v1h-1zM166 359h1v1h-1zM167 353h1v1h-1zM167 360h1v1h-1zM168 353h1v1h-1zM169 357h1v1h-1zM169 358h1v1h-1zM171 359h1v1h-1zM173 358h1v1h-1zM174 357h1v1h-1zM174 358h1v1h-1zM174 359h1v1h-1zM179 356h1v1h-1zM181 357h1v1h-1zM182 359h1v1h-1zM183 353h1v1h-1zM183 354h1v1h-1zM184 354h1v1h-1zM184 359h1v1h-1zM185 354h1v1h-1zM185 358h1v1h-1zM187 360h1v1h-1zM189 360h1v1h-1zM190 354h1v1h-1zM190 355h1v1h-1zM190 357h1v1h-1zM190 358h1v1h-1zM192 357h1v1h-1zM193 356h1v1h-1zM194 360h1v1h-1zM195 354h1v1h-1zM195 360h1v1h-1zM196 358h1v1h-1zM196 359h1v1h-1zM197 357h1v1h-1zM197 358h1v1h-1zM198 359h1v1h-1zM199 358h1v1h-1zM204 359h1v1h-1zM205 357h1v1h-1zM206 354h1v1h-1zM208 354h1v1h-1zM209 360h1v1h-1zM212 358h1v1h-1zM213 359h1v1h-1zM215 358h1v1h-1zM216 358h1v1h-1zM220 354h1v1h-1zM220 357h1v1h-1zM221 358h1v1h-1zM221 360h1v1h-1zM222 354h1v1h-1zM222 357h1v1h-1zM222 360h1v1h-1zM223 360h1v1h-1zM224 358h1v1h-1zM225 360h1v1h-1zM226 359h1v1h-1zM227 357h1v1h-1zM227 358h1v1h-1zM228 353h1v1h-1zM228 359h1v1h-1zM229 354h1v1h-1zM230 353h1v1h-1zM231 353h1v1h-1zM232 357h1v1h-1zM232 359h1v1h-1zM232 360h1v1h-1zM236 354h1v1h-1zM237 356h1v1h-1zM237 358h1v1h-1zM238 354h1v1h-1zM238 358h1v1h-1zM239 357h1v1h-1zM240 359h1v1h-1zM241 357h1v1h-1zM242 356h1v1h-1zM243 360h1v1h-1zM249 357h1v1h-1zM251 357h1v1h-1zM252 359h1v1h-1zM253 358h1v1h-1zM254 353h1v1h-1zM254 354h1v1h-1zM258 354h1v1h-1zM258 359h1v1h-1zM260 356h1v1h-1zM261 354h1v1h-1zM261 356h1v1h-1zM265 357h1v1h-1zM266 356h1v1h-1zM268 354h1v1h-1zM268 358h1v1h-1zM269 353h1v1h-1zM269 358h1v1h-1zM271 355h1v1h-1zM274 359h1v1h-1zM275 354h1v1h-1zM276 358h1v1h-1zM277 356h1v1h-1zM278 354h1v1h-1zM279 359h1v1h-1zM279 360h1v1h-1zM280 355h1v1h-1zM280 356h1v1h-1zM281 354h1v1h-1zM281 360h1v1h-1zM282 354h1v1h-1zM284 354h1v1h-1zM288 353h1v1h-1zM290 354h1v1h-1zM292 358h1v1h-1zM293 355h1v1h-1zM294 356h1v1h-1zM295 359h1v1h-1zM297 358h1v1h-1zM297 360h1v1h-1zM299 354h1v1h-1zM300 355h1v1h-1zM300 359h1v1h-1zM301 354h1v1h-1zM301 355h1v1h-1zM303 355h1v1h-1zM303 357h1v1h-1zM305 354h1v1h-1zM306 359h1v1h-1zM307 354h1v1h-1zM307 360h1v1h-1zM308 360h1v1h-1zM310 359h1v1h-1zM311 359h1v1h-1zM312 358h1v1h-1zM312 359h1v1h-1zM315 354h1v1h-1zM319 354h1v1h-1zM321 353h1v1h-1zM321 359h1v1h-1zM322 358h1v1h-1zM323 357h1v1h-1zM323 359h1v1h-1zM324 357h1v1h-1zM325 355h1v1h-1zM325 360h1v1h-1zM326 358h1v1h-1zM326 359h1v1h-1zM326 360h1v1h-1zM327 359h1v1h-1zM329 354h1v1h-1zM335 353h1v1h-1zM337 355h1v1h-1zM337 357h1v1h-1zM337 359h1v1h-1zM338 359h1v1h-1zM338 360h1v1h-1zM339 353h1v1h-1zM339 355h1v1h-1zM340 359h1v1h-1zM341 359h1v1h-1zM342 355h1v1h-1zM345 359h1v1h-1zM348 360h1v1h-1zM353 358h1v1h-1zM362 353h1v1h-1zM366 359h1v1h-1zM367 359h1v1h-1zM368 359h1v1h-1zM370 354h1v1h-1zM372 356h1v1h-1zM372 357h1v1h-1zM374 354h1v1h-1zM376 358h1v1h-1zM376 359h1v1h-1zM380 358h1v1h-1zM381 356h1v1h-1zM383 360h1v1h-1zM385 357h1v1h-1zM385 360h1v1h-1zM386 355h1v1h-1zM388 357h1v1h-1zM388 358h1v1h-1zM390 360h1v1h-1zM391 354h1v1h-1zM393 356h1v1h-1zM397 359h1v1h-1zM398 358h1v1h-1zM402 358h1v1h-1zM404 353h1v1h-1zM409 360h1v1h-1zM411 359h1v1h-1zM415 359h1v1h-1zM417 358h1v1h-1zM421 359h1v1h-1zM424 359h1v1h-1zM425 354h1v1h-1zM426 354h1v1h-1zM426 360h1v1h-1zM429 359h1v1h-1zM430 356h1v1h-1zM431 357h1v1h-1zM433 359h1v1h-1zM440 354h1v1h-1zM440 357h1v1h-1zM453 356h1v1h-1zM453 357h1v1h-1zM455 356h1v1h-1zM457 354h1v1h-1zM462 355h1v1h-1zM464 357h1v1h-1zM465 359h1v1h-1zM466 354h1v1h-1zM467 359h1v1h-1zM469 357h1v1h-1zM470 356h1v1h-1zM472 353h1v1h-1zM473 357h1v1h-1zM474 357h1v1h-1zM478 357h1v1h-1zM486 356h1v1h-1zM486 358h1v1h-1zM493 357h1v1h-1zM493 360h1v1h-1zM502 357h1v1h-1zM512 358h1v1h-1zM514 358h1v1h-1zM514 359h1v1h-1zM518 359h1v1h-1zM520 356h1v1h-1zM521 353h1v1h-1zM521 357h1v1h-1zM525 360h1v1h-1zM527 354h1v1h-1zM531 357h1v1h-1zM531 358h1v1h-1zM535 360h1v1h-1zM539 358h1v1h-1zM542 356h1v1h-1z" fill="#ffff00"/><rect x="52" y="145" width="2" height="218" fill="#000"/><rect x="54" y="361" width="489" height="1" fill="#7c7c7c"/><rect x="52" y="362" width="492" height="1" fill="#000"/><rect x="543" y="145" width="1" height="218" fill="#000"/><rect x="51" y="147" width="3" height="1" fill="#000"/><rect x="50" y="158" width="3" height="1" fill="#000"/><rect x="51" y="169" width="3" height="1" fill="#000"/><rect x="50" y="180" width="3" height="1" fill="#000"/><rect x="51" y="190" width="3" height="1" fill="#000"/><rect x="50" y="201" width="3" height="1" fill="#000"/><rect x="51" y="212" width="3" height="1" fill="#000"/><rect x="50" y="222" width="3" height="1" fill="#000"/><rect x="51" y="233" width="3" height="1" fill="#000"/><rect x="50" y="244" width="3" height="1" fill="#000"/><rect x="51" y="254" width="3" height="1" fill="#000"/><rect x="50" y="265" width="3" height="1" fill="#000"/><rect x="51" y="276" width="3" height="1" fill="#000"/><rect x="50" y="286" width="3" height="1" fill="#000"/><rect x="51" y="297" width="3" height="1" fill="#000"/><rect x="50" y="308" width="3" height="1" fill="#000"/><rect x="51" y="319" width="3" height="1" fill="#000"/><rect x="50" y="329" width="3" height="1" fill="#000"/><rect x="51" y="340" width="3" height="1" fill="#000"/><rect x="50" y="351" width="3" height="1" fill="#000"/><rect x="51" y="361" width="3" height="1" fill="#000"/><rect x="54" y="362" width="1" height="3" fill="#404040"/><rect x="78" y="362" width="1" height="3" fill="#404040"/><rect x="102" y="362" width="1" height="3" fill="#404040"/><rect x="127" y="362" width="1" height="3" fill="#404040"/><rect x="151" y="362" width="1" height="3" fill="#404040"/><rect x="176" y="362" width="1" height="3" fill="#404040"/><rect x="200" y="362" width="1" height="3" fill="#404040"/><rect x="224" y="362" width="1" height="3" fill="#404040"/><rect x="249" y="362" width="1" height="3" fill="#404040"/><rect x="273" y="362" width="1" height="3" fill="#404040"/><rect x="298" y="362" width="1" height="3" fill="#404040"/><rect x="322" y="362" width="1" height="3" fill="#404040"/><rect x="346" y="362" width="1" height="3" fill="#404040"/><rect x="371" y="362" width="1" height="3" fill="#404040"/><rect x="395" y="362" width="1" height="3" fill="#404040"/><rect x="420" y="362" width="1" height="3" fill="#404040"/><rect x="444" y="362" width="1" height="3" fill="#404040"/><rect x="468" y="362" width="1" height="3" fill="#404040"/><rect x="493" y="362" width="1" height="3" fill="#404040"/><rect x="517" y="362" width="1" height="3" fill="#404040"/><rect x="542" y="362" width="1" height="3" fill="#404040"/></svg>
<div class="t" style="position:absolute;left:0;width:50px;text-align:right;top:141px;line-height:12px;font-size:11px">10.0</div>
<div class="t" style="position:absolute;left:0;width:50px;text-align:right;top:163px;line-height:12px;font-size:11px">9.00</div>
<div class="t" style="position:absolute;left:0;width:50px;text-align:right;top:184px;line-height:12px;font-size:11px">8.00</div>
<div class="t" style="position:absolute;left:0;width:50px;text-align:right;top:206px;line-height:12px;font-size:11px">7.00</div>
<div class="t" style="position:absolute;left:0;width:50px;text-align:right;top:227px;line-height:12px;font-size:11px">6.00</div>
<div class="t" style="position:absolute;left:0;width:50px;text-align:right;top:248px;line-height:12px;font-size:11px">5.00</div>
<div class="t" style="position:absolute;left:0;width:50px;text-align:right;top:270px;line-height:12px;font-size:11px">4.00</div>
<div class="t" style="position:absolute;left:0;width:50px;text-align:right;top:291px;line-height:12px;font-size:11px">3.00</div>
<div class="t" style="position:absolute;left:0;width:50px;text-align:right;top:313px;line-height:12px;font-size:11px">2.00</div>
<div class="t" style="position:absolute;left:0;width:50px;text-align:right;top:334px;line-height:12px;font-size:11px">1.00</div>
<div class="t" style="position:absolute;left:54px;top:134.69px;line-height:11px;font-size:11px;font-weight:normal;color:#000;white-space:pre;">ms</div>
<div class="t" style="position:absolute;left:33px;width:41px;text-align:center;top:366px;line-height:12px;font-size:11px">0</div>
<div class="t" style="position:absolute;left:81px;width:41px;text-align:center;top:366px;line-height:12px;font-size:11px">2</div>
<div class="t" style="position:absolute;left:130px;width:41px;text-align:center;top:366px;line-height:12px;font-size:11px">4</div>
<div class="t" style="position:absolute;left:179px;width:41px;text-align:center;top:366px;line-height:12px;font-size:11px">6</div>
<div class="t" style="position:absolute;left:228px;width:41px;text-align:center;top:366px;line-height:12px;font-size:11px">8</div>
<div class="t" style="position:absolute;left:277px;width:41px;text-align:center;top:366px;line-height:12px;font-size:11px">10</div>
<div class="t" style="position:absolute;left:325px;width:41px;text-align:center;top:366px;line-height:12px;font-size:11px">12</div>
<div class="t" style="position:absolute;left:374px;width:41px;text-align:center;top:366px;line-height:12px;font-size:11px">14</div>
<div class="t" style="position:absolute;left:423px;width:41px;text-align:center;top:366px;line-height:12px;font-size:11px">16</div>
<div class="t" style="position:absolute;left:472px;width:41px;text-align:center;top:366px;line-height:12px;font-size:11px">18</div>
<div class="t" style="position:absolute;left:528px;top:366.69px;line-height:11px;font-size:11px;font-weight:normal;color:#000;white-space:pre;">21gB</div>
<div style="position:absolute;left:567px;top:143px;width:165px;height:23px;box-sizing:border-box;background:#d4d0c8;border:1px solid;border-color:#fff #404040 #404040 #fff;box-shadow:inset -1px -1px #808080;"></div>
<div class="t" style="position:absolute;left:624px;top:148.69px;line-height:11px;font-size:11px;font-weight:normal;color:#000;white-space:pre;">Запустить</div>
<div style="position:absolute;left:564px;top:175px;width:166px;height:1px;background:#808080;"></div><div style="position:absolute;left:564px;top:176px;width:166px;height:1px;background:#fff;"></div>
<div style="position:absolute;left:564px;top:214px;width:166px;height:1px;background:#808080;"></div><div style="position:absolute;left:564px;top:215px;width:166px;height:1px;background:#fff;"></div>
<div style="position:absolute;left:564px;top:271px;width:166px;height:1px;background:#808080;"></div><div style="position:absolute;left:564px;top:272px;width:166px;height:1px;background:#fff;"></div>
<svg style="left:565px;top:181px" width="12" height="12" shape-rendering="crispEdges"><path d="M4 0h4v1h-4zM2 1h2v1h-2zM8 1h2v1h-2zM1 2h1v1h-1zM1 3h1v1h-1zM0 4h1v1h-1zM0 5h1v1h-1zM0 6h1v1h-1zM0 7h1v1h-1zM1 8h1v1h-1zM1 9h1v1h-1z" fill="#808080"/><path d="M4 1h4v1h-4zM2 2h2v1h-2zM8 2h2v1h-2zM2 3h1v1h-1zM1 4h1v1h-1zM1 5h1v1h-1zM1 6h1v1h-1zM1 7h1v1h-1zM2 8h1v1h-1z" fill="#404040"/><path d="M4 2h4v1h-4zM10 2h1v1h-1zM3 3h6v1h-6zM10 3h1v1h-1zM2 4h3v1h-3zM7 4h3v1h-3zM11 4h1v1h-1zM2 5h2v1h-2zM8 5h2v1h-2zM11 5h1v1h-1zM2 6h2v1h-2zM8 6h2v1h-2zM11 6h1v1h-1zM2 7h3v1h-3zM7 7h3v1h-3zM11 7h1v1h-1zM3 8h6v1h-6zM10 8h1v1h-1zM4 9h4v1h-4zM10 9h1v1h-1zM2 10h2v1h-2zM8 10h2v1h-2zM4 11h4v1h-4z" fill="#ffffff"/><path d="M9 3h1v1h-1zM10 4h1v1h-1zM10 5h1v1h-1zM10 6h1v1h-1zM10 7h1v1h-1zM9 8h1v1h-1zM2 9h2v1h-2zM8 9h2v1h-2zM4 10h4v1h-4z" fill="#d4d0c8"/><path d="M5 4h2v1h-2zM4 5h4v1h-4zM4 6h4v1h-4zM5 7h2v1h-2z" fill="#000000"/></svg>
<svg style="left:565px;top:197px" width="12" height="12" shape-rendering="crispEdges"><path d="M4 0h4v1h-4zM2 1h2v1h-2zM8 1h2v1h-2zM1 2h1v1h-1zM1 3h1v1h-1zM0 4h1v1h-1zM0 5h1v1h-1zM0 6h1v1h-1zM0 7h1v1h-1zM1 8h1v1h-1zM1 9h1v1h-1z" fill="#808080"/><path d="M4 1h4v1h-4zM2 2h2v1h-2zM8 2h2v1h-2zM2 3h1v1h-1zM1 4h1v1h-1zM1 5h1v1h-1zM1 6h1v1h-1zM1 7h1v1h-1zM2 8h1v1h-1z" fill="#404040"/><path d="M4 2h4v1h-4zM10 2h1v1h-1zM3 3h6v1h-6zM10 3h1v1h-1zM2 4h8v1h-8zM11 4h1v1h-1zM2 5h8v1h-8zM11 5h1v1h-1zM2 6h8v1h-8zM11 6h1v1h-1zM2 7h8v1h-8zM11 7h1v1h-1zM3 8h6v1h-6zM10 8h1v1h-1zM4 9h4v1h-4zM10 9h1v1h-1zM2 10h2v1h-2zM8 10h2v1h-2zM4 11h4v1h-4z" fill="#ffffff"/><path d="M9 3h1v1h-1zM10 4h1v1h-1zM10 5h1v1h-1zM10 6h1v1h-1zM10 7h1v1h-1zM9 8h1v1h-1zM2 9h2v1h-2zM8 9h2v1h-2zM4 10h4v1h-4z" fill="#d4d0c8"/></svg>
<div class="t" style="position:absolute;left:583px;top:182.69px;line-height:11px;font-size:11px;font-weight:normal;color:#000;white-space:pre;">Чтение</div>
<div class="t" style="position:absolute;left:583px;top:198.69px;line-height:11px;font-size:11px;font-weight:normal;color:#000;white-space:pre;">Запись</div>
<div style="position:absolute;left:564px;top:222px;width:13px;height:13px;box-sizing:border-box;background:#fff;border:1px solid;border-color:#808080 #fff #fff #808080;box-shadow:inset 1px 1px #404040, inset -1px -1px #d4d0c8;"></div>
<div class="t" style="position:absolute;left:583px;top:223.69px;line-height:11px;font-size:11px;font-weight:normal;color:#000;white-space:pre;">Короткий рабочий ход</div>
<div style="position:absolute;left:564px;top:242px;width:62px;height:20px;box-sizing:border-box;background:#d4d0c8;border:1px solid;border-color:#808080 #fff #fff #808080;box-shadow:inset 1px 1px #404040, inset -1px -1px #d4d0c8;"></div>
<div class="t" style="position:absolute;left:568px;top:246.69px;line-height:11px;font-size:11px;font-weight:normal;color:#808080;white-space:pre;">40</div>
<div style="position:absolute;left:609px;top:244px;width:15px;height:8px;box-sizing:border-box;background:#d4d0c8;border:1px solid;border-color:#d4d0c8 #404040 #404040 #d4d0c8;box-shadow:inset -1px -1px #808080, inset 1px 1px #fff;"></div>
<div style="position:absolute;left:609px;top:252px;width:15px;height:8px;box-sizing:border-box;background:#d4d0c8;border:1px solid;border-color:#d4d0c8 #404040 #404040 #d4d0c8;box-shadow:inset -1px -1px #808080, inset 1px 1px #fff;"></div>
<div style="position:absolute;left:618px;top:248px;width:1px;height:1px;background:#fff;"></div><div style="position:absolute;left:617px;top:249px;width:3px;height:1px;background:#fff;"></div><div style="position:absolute;left:617px;top:247px;width:1px;height:1px;background:#808080;"></div><div style="position:absolute;left:616px;top:248px;width:3px;height:1px;background:#808080;"></div>
<div style="position:absolute;left:617px;top:256px;width:3px;height:1px;background:#fff;"></div><div style="position:absolute;left:618px;top:257px;width:1px;height:1px;background:#fff;"></div><div style="position:absolute;left:616px;top:255px;width:3px;height:1px;background:#808080;"></div><div style="position:absolute;left:617px;top:256px;width:1px;height:1px;background:#808080;"></div>
<div class="t" style="position:absolute;left:636px;top:246.69px;line-height:11px;font-size:11px;font-weight:normal;color:#000;white-space:pre;">ГБ</div>
<div style="position:absolute;left:564px;top:282px;width:13px;height:13px;box-sizing:border-box;background:#fff;border:1px solid;border-color:#808080 #fff #fff #808080;box-shadow:inset 1px 1px #404040, inset -1px -1px #d4d0c8;"></div>
<svg style="left:564px;top:282px" width="13" height="13" viewBox="0 0 13 13"><path d="M9 3h1v1h-1zM8 4h2v1h-2zM3 5h1v1h-1zM7 5h3v1h-3zM3 6h2v1h-2zM6 6h3v1h-3zM3 7h5v1h-5zM4 8h3v1h-3zM5 9h1v1h-1z" fill="#000"/></svg>
<div class="t" style="position:absolute;left:583px;top:283.69px;line-height:11px;font-size:11px;font-weight:normal;color:#000;white-space:pre;">4 КБ выравнивание</div>
<div class="t" style="position:absolute;left:33px;top:387.84px;line-height:12px;font-size:12px;font-weight:bold;color:#000;white-space:pre;">размер передачи</div>
<div class="t" style="position:absolute;left:162px;top:387.84px;line-height:12px;font-size:12px;font-weight:bold;color:#000;white-space:pre;">операций в секунду</div>
<div class="t" style="position:absolute;left:306px;top:387.84px;line-height:12px;font-size:12px;font-weight:bold;color:#000;white-space:pre;">ср. время доступа</div>
<div class="t" style="position:absolute;left:458px;top:387.84px;line-height:12px;font-size:12px;font-weight:bold;color:#000;white-space:pre;">макс время доступа</div>
<div class="t" style="position:absolute;left:605px;top:387.84px;line-height:12px;font-size:12px;font-weight:bold;color:#000;white-space:pre;">средняя скорость</div>
<div style="position:absolute;left:39px;top:401px;width:672px;height:2px;background:#404040;"></div>
<div style="position:absolute;left:147px;top:387px;width:2px;height:104px;background:#404040;"></div>
<div style="position:absolute;left:282px;top:387px;width:2px;height:104px;background:#404040;"></div>
<div style="position:absolute;left:435px;top:387px;width:2px;height:104px;background:#404040;"></div>
<div style="position:absolute;left:586px;top:387px;width:2px;height:18px;background:#404040;"></div>
<div style="position:absolute;left:586px;top:419px;width:2px;height:3px;background:#404040;"></div>
<div style="position:absolute;left:586px;top:435px;width:2px;height:3px;background:#404040;"></div>
<div style="position:absolute;left:586px;top:452px;width:2px;height:3px;background:#404040;"></div>
<div style="position:absolute;left:586px;top:469px;width:2px;height:3px;background:#404040;"></div>
<div style="position:absolute;left:586px;top:487px;width:2px;height:3px;background:#404040;"></div>
<div style="position:absolute;left:24px;top:410px;width:8px;height:8px;background:#ffff00;border:1px solid #000"></div>
<div style="position:absolute;left:39px;top:407px;width:13px;height:13px;box-sizing:border-box;background:#fff;border:1px solid;border-color:#808080 #fff #fff #808080;box-shadow:inset 1px 1px #404040, inset -1px -1px #d4d0c8;"></div>
<svg style="left:39px;top:407px" width="13" height="13" viewBox="0 0 13 13"><path d="M9 3h1v1h-1zM8 4h2v1h-2zM3 5h1v1h-1zM7 5h3v1h-3zM3 6h2v1h-2zM6 6h3v1h-3zM3 7h5v1h-5zM4 8h3v1h-3zM5 9h1v1h-1z" fill="#000"/></svg>
<div class="t" style="position:absolute;left:58px;top:408.69px;line-height:11px;font-size:11px;font-weight:normal;color:#000;white-space:pre;">512 байт</div>
<div class="t" style="position:absolute;left:119px;width:150px;text-align:right;top:407.40px;line-height:12px;font-size:12px;font-weight:bold;white-space:pre;letter-spacing:0px">4869 IOPS</div>
<div class="t" style="position:absolute;left:270.5px;width:150px;text-align:right;top:407.40px;line-height:12px;font-size:12px;font-weight:bold;white-space:pre;letter-spacing:0.5px">0.205 мс</div>
<div class="t" style="position:absolute;left:384.5px;width:150px;text-align:right;top:407.40px;line-height:12px;font-size:12px;font-weight:bold;white-space:pre;letter-spacing:0.5px">5.922 мс</div>
<div class="t" style="position:absolute;left:514px;width:150px;text-align:right;top:407.40px;line-height:12px;font-size:12px;font-weight:bold;white-space:pre;letter-spacing:0px">2.378</div>
<div style="position:absolute;left:24px;top:426px;width:8px;height:8px;background:#ff0000;border:1px solid #000"></div>
<div style="position:absolute;left:39px;top:423px;width:13px;height:13px;box-sizing:border-box;background:#fff;border:1px solid;border-color:#808080 #fff #fff #808080;box-shadow:inset 1px 1px #404040, inset -1px -1px #d4d0c8;"></div>
<svg style="left:39px;top:423px" width="13" height="13" viewBox="0 0 13 13"><path d="M9 3h1v1h-1zM8 4h2v1h-2zM3 5h1v1h-1zM7 5h3v1h-3zM3 6h2v1h-2zM6 6h3v1h-3zM3 7h5v1h-5zM4 8h3v1h-3zM5 9h1v1h-1z" fill="#000"/></svg>
<div class="t" style="position:absolute;left:58px;top:425.69px;line-height:11px;font-size:11px;font-weight:normal;color:#000;white-space:pre;">4 КБ</div>
<div class="t" style="position:absolute;left:119px;width:150px;text-align:right;top:423.40px;line-height:12px;font-size:12px;font-weight:bold;white-space:pre;letter-spacing:0px">4708 IOPS</div>
<div class="t" style="position:absolute;left:270.5px;width:150px;text-align:right;top:423.40px;line-height:12px;font-size:12px;font-weight:bold;white-space:pre;letter-spacing:0.5px">0.212 мс</div>
<div class="t" style="position:absolute;left:384.5px;width:150px;text-align:right;top:423.40px;line-height:12px;font-size:12px;font-weight:bold;white-space:pre;letter-spacing:0.5px">3.129 мс</div>
<div class="t" style="position:absolute;left:514px;width:150px;text-align:right;top:423.40px;line-height:12px;font-size:12px;font-weight:bold;white-space:pre;letter-spacing:0px">18.394</div>
<div style="position:absolute;left:24px;top:443px;width:8px;height:8px;background:#00ff00;border:1px solid #000"></div>
<div style="position:absolute;left:39px;top:440px;width:13px;height:13px;box-sizing:border-box;background:#fff;border:1px solid;border-color:#808080 #fff #fff #808080;box-shadow:inset 1px 1px #404040, inset -1px -1px #d4d0c8;"></div>
<svg style="left:39px;top:440px" width="13" height="13" viewBox="0 0 13 13"><path d="M9 3h1v1h-1zM8 4h2v1h-2zM3 5h1v1h-1zM7 5h3v1h-3zM3 6h2v1h-2zM6 6h3v1h-3zM3 7h5v1h-5zM4 8h3v1h-3zM5 9h1v1h-1z" fill="#000"/></svg>
<div class="t" style="position:absolute;left:58px;top:441.69px;line-height:11px;font-size:11px;font-weight:normal;color:#000;white-space:pre;">64 КБ</div>
<div class="t" style="position:absolute;left:119px;width:150px;text-align:right;top:440.40px;line-height:12px;font-size:12px;font-weight:bold;white-space:pre;letter-spacing:0px">2999 IOPS</div>
<div class="t" style="position:absolute;left:270.5px;width:150px;text-align:right;top:440.40px;line-height:12px;font-size:12px;font-weight:bold;white-space:pre;letter-spacing:0.5px">0.333 мс</div>
<div class="t" style="position:absolute;left:384.5px;width:150px;text-align:right;top:440.40px;line-height:12px;font-size:12px;font-weight:bold;white-space:pre;letter-spacing:0.5px">3.537 мс</div>
<div class="t" style="position:absolute;left:514px;width:150px;text-align:right;top:440.40px;line-height:12px;font-size:12px;font-weight:bold;white-space:pre;letter-spacing:0px">187.461</div>
<div style="position:absolute;left:24px;top:460px;width:8px;height:8px;background:#0080ff;border:1px solid #000"></div>
<div style="position:absolute;left:39px;top:457px;width:13px;height:13px;box-sizing:border-box;background:#fff;border:1px solid;border-color:#808080 #fff #fff #808080;box-shadow:inset 1px 1px #404040, inset -1px -1px #d4d0c8;"></div>
<svg style="left:39px;top:457px" width="13" height="13" viewBox="0 0 13 13"><path d="M9 3h1v1h-1zM8 4h2v1h-2zM3 5h1v1h-1zM7 5h3v1h-3zM3 6h2v1h-2zM6 6h3v1h-3zM3 7h5v1h-5zM4 8h3v1h-3zM5 9h1v1h-1z" fill="#000"/></svg>
<div class="t" style="position:absolute;left:58px;top:458.69px;line-height:11px;font-size:11px;font-weight:normal;color:#000;white-space:pre;">1 МБ</div>
<div class="t" style="position:absolute;left:119px;width:150px;text-align:right;top:457.40px;line-height:12px;font-size:12px;font-weight:bold;white-space:pre;letter-spacing:0px">756 IOPS</div>
<div class="t" style="position:absolute;left:270.5px;width:150px;text-align:right;top:457.40px;line-height:12px;font-size:12px;font-weight:bold;white-space:pre;letter-spacing:0.5px">1.321 мс</div>
<div class="t" style="position:absolute;left:384.5px;width:150px;text-align:right;top:457.40px;line-height:12px;font-size:12px;font-weight:bold;white-space:pre;letter-spacing:0.5px">4.962 мс</div>
<div class="t" style="position:absolute;left:514px;width:150px;text-align:right;top:457.40px;line-height:12px;font-size:12px;font-weight:bold;white-space:pre;letter-spacing:0px">756.861</div>
<div style="position:absolute;left:24px;top:478px;width:8px;height:8px;background:#00ffff;border:1px solid #000"></div>
<div style="position:absolute;left:39px;top:475px;width:13px;height:13px;box-sizing:border-box;background:#fff;border:1px solid;border-color:#808080 #fff #fff #808080;box-shadow:inset 1px 1px #404040, inset -1px -1px #d4d0c8;"></div>
<svg style="left:39px;top:475px" width="13" height="13" viewBox="0 0 13 13"><path d="M9 3h1v1h-1zM8 4h2v1h-2zM3 5h1v1h-1zM7 5h3v1h-3zM3 6h2v1h-2zM6 6h3v1h-3zM3 7h5v1h-5zM4 8h3v1h-3zM5 9h1v1h-1z" fill="#000"/></svg>
<div class="t" style="position:absolute;left:58px;top:475.69px;line-height:11px;font-size:11px;font-weight:normal;color:#000;white-space:pre;">Случайный</div>
<div class="t" style="position:absolute;left:119px;width:150px;text-align:right;top:475.40px;line-height:12px;font-size:12px;font-weight:bold;white-space:pre;letter-spacing:0px">1148 IOPS</div>
<div class="t" style="position:absolute;left:270.5px;width:150px;text-align:right;top:475.40px;line-height:12px;font-size:12px;font-weight:bold;white-space:pre;letter-spacing:0.5px">0.870 мс</div>
<div class="t" style="position:absolute;left:384.5px;width:150px;text-align:right;top:475.40px;line-height:12px;font-size:12px;font-weight:bold;white-space:pre;letter-spacing:0.5px">4.366 мс</div>
<div class="t" style="position:absolute;left:514px;width:150px;text-align:right;top:475.40px;line-height:12px;font-size:12px;font-weight:bold;white-space:pre;letter-spacing:0px">582.969</div>
</body></html>
